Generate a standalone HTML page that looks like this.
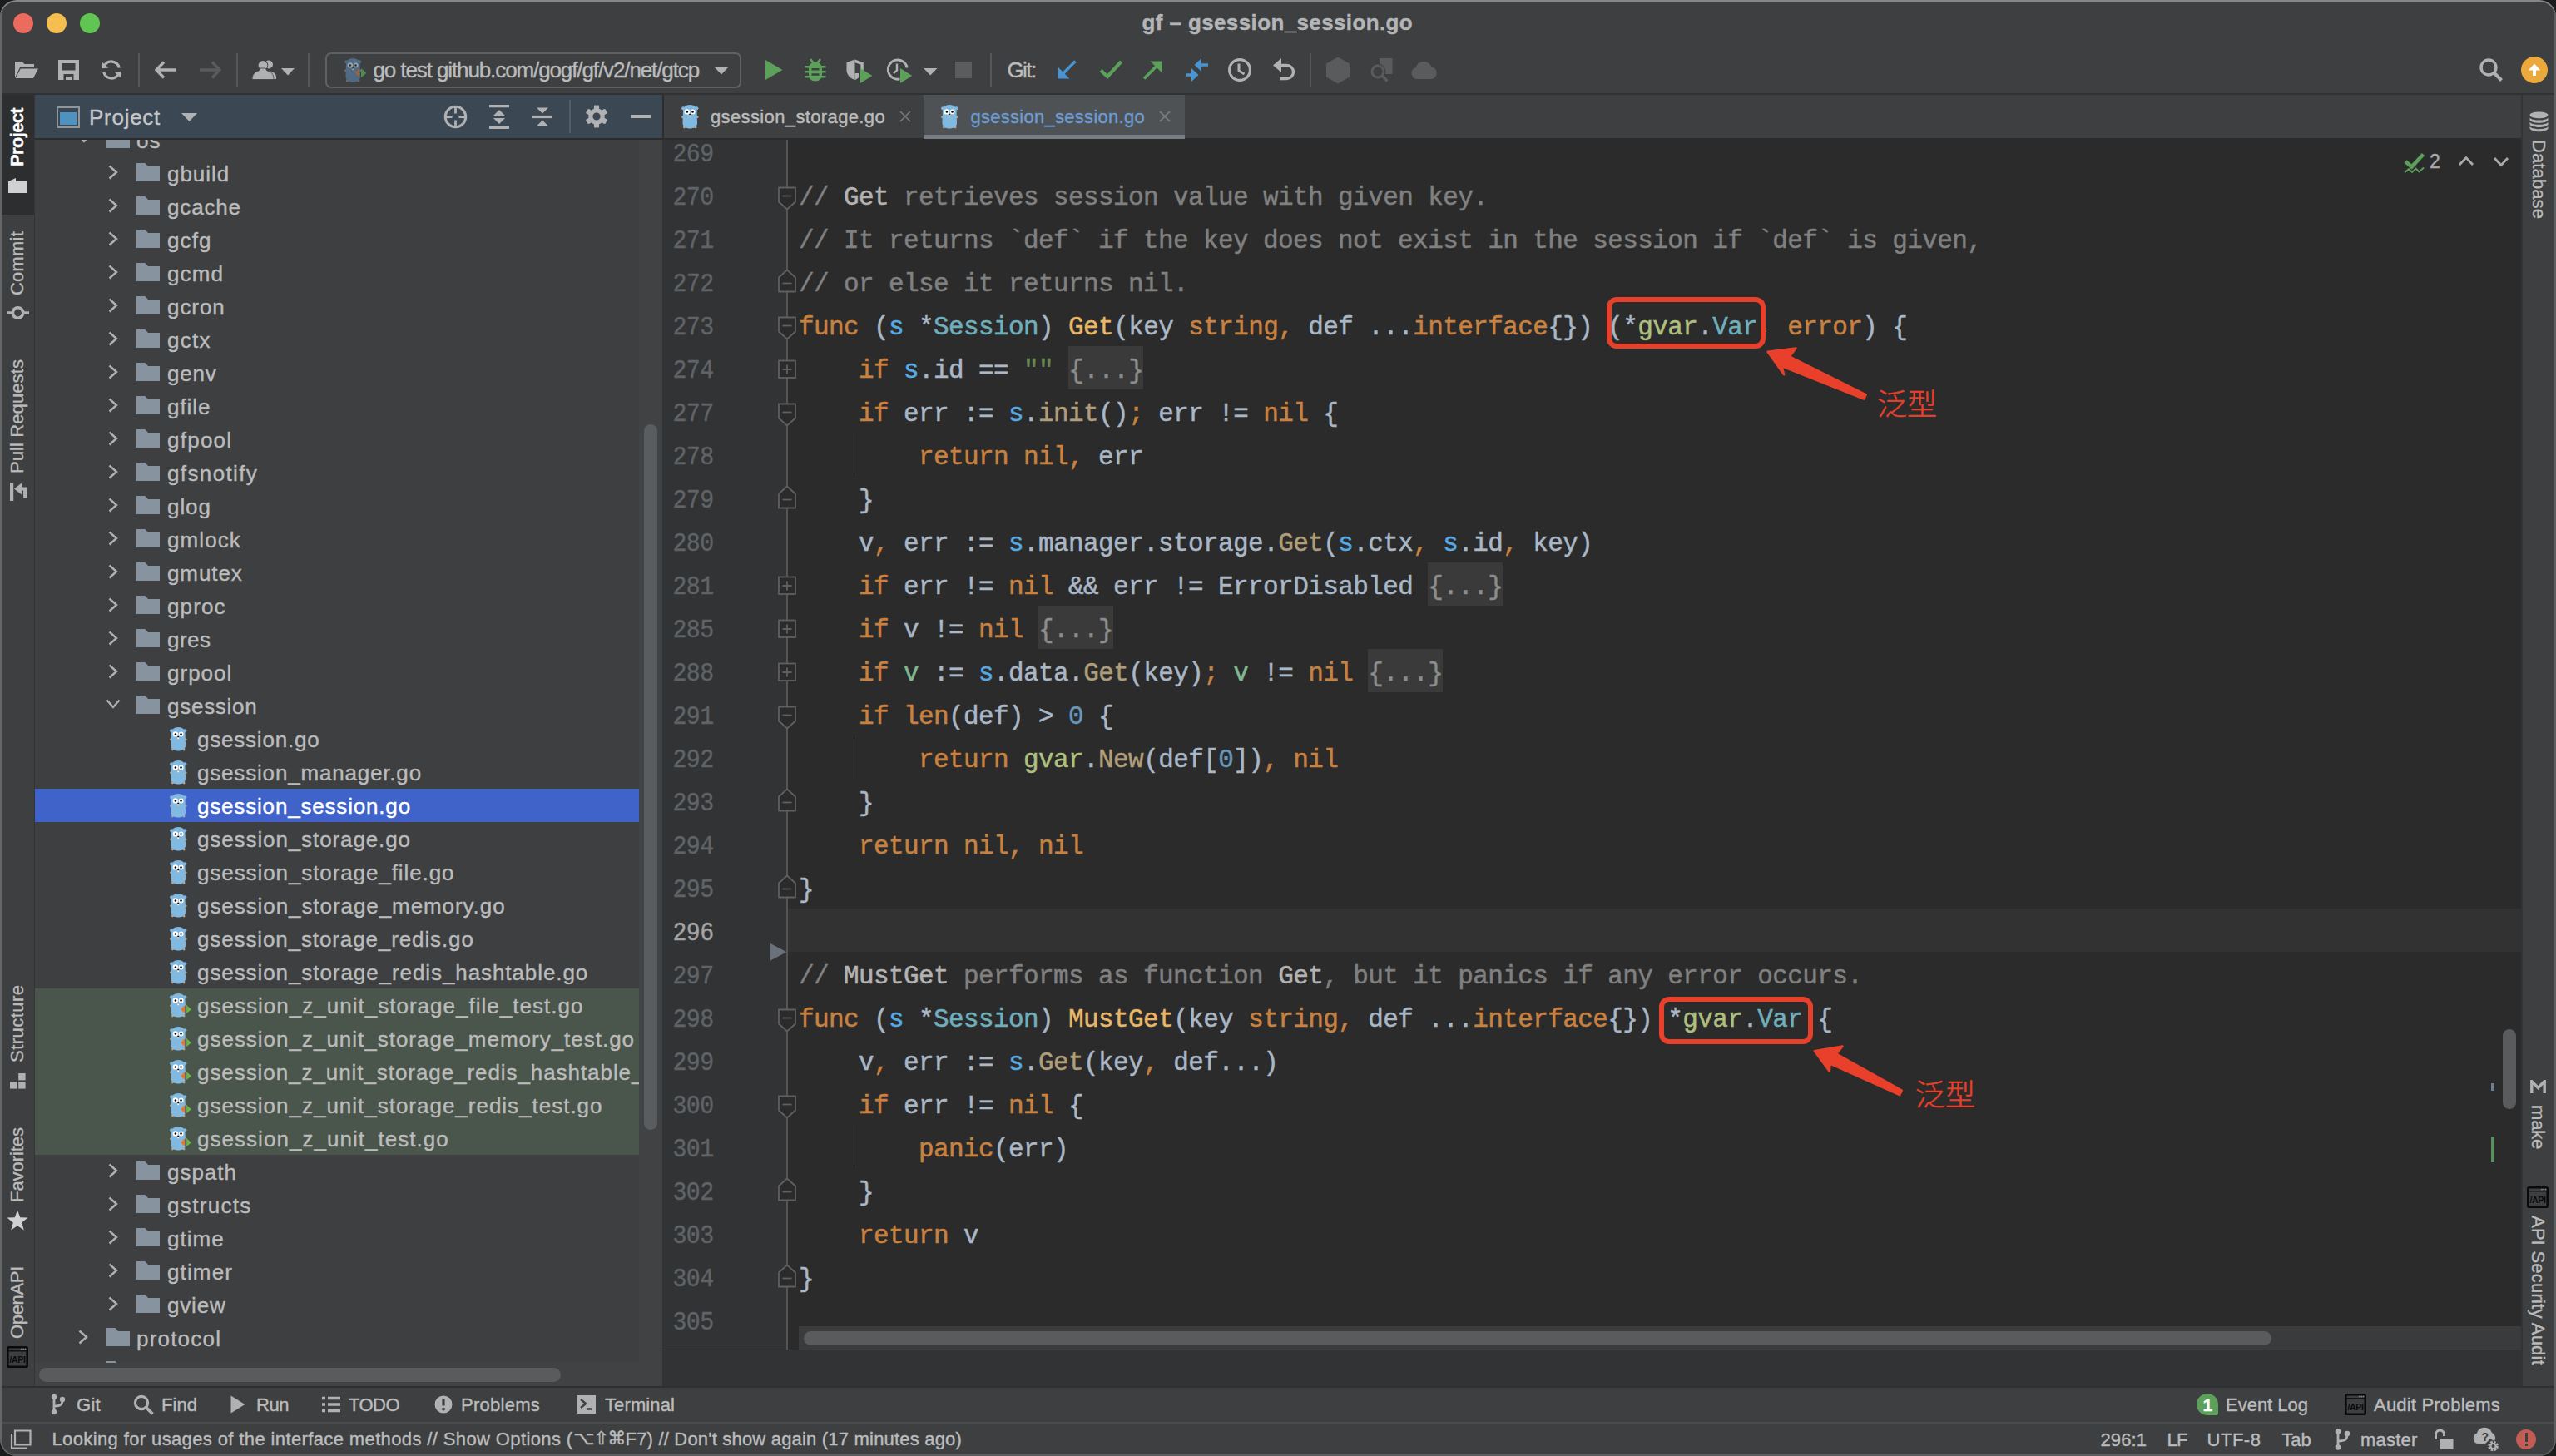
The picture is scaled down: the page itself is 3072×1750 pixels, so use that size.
<!DOCTYPE html>
<html><head><meta charset="utf-8"><title>gf – gsession_session.go</title><style>
html,body{margin:0;padding:0;background:#1b1c1c;}
body{width:3072px;height:1750px;overflow:hidden;position:relative;font-family:"Liberation Sans","Noto Sans CJK SC",sans-serif;}
#win{position:absolute;left:0;top:0;width:3072px;height:1750px;background:#3d3f41;border-radius:20px;overflow:hidden;}
.b{position:absolute;display:block;}
.t{position:absolute;white-space:pre;-webkit-text-stroke:0.4px;}
.code{-webkit-text-stroke:0.5px;position:absolute;white-space:pre;font-family:"Liberation Mono",monospace;font-size:31px;letter-spacing:-0.6px;line-height:52px;color:#a9b7c6;left:960px;}
.ln{-webkit-text-stroke:0.4px;position:absolute;white-space:pre;font-family:"Liberation Mono",monospace;font-size:31px;letter-spacing:-0.6px;line-height:52px;color:#606366;left:806px;transform:scaleX(0.91);transform-origin:27px 0;}
.k{color:#c98140}.c{color:#808080}.cd{color:#b3b3b3}.fd{color:#e8b768}.fc{color:#b09d79}.r{color:#56aae4}.ty{color:#6fafbd}.pk{color:#afbf7e}.s{color:#6a8759}.n{color:#6897bb}.sv{color:#7fb992}
.fold{background:#3a3a3a;color:#8c8c8c;padding:11.5px 0 5.5px;}
.vt{position:absolute;white-space:pre;transform-origin:0 0;}
</style></head><body><div id="win">
<div class="b" style="left:16px;top:16px;width:24px;height:24px;background:#ec6a5e;border-radius:50%;"></div>
<div class="b" style="left:56px;top:16px;width:24px;height:24px;background:#f4bf4f;border-radius:50%;"></div>
<div class="b" style="left:96px;top:16px;width:24px;height:24px;background:#61c554;border-radius:50%;"></div>
<div class="t" style="left:1372.6px;top:7.5px;line-height:39px;font-size:26px;color:#b4b5b6;letter-spacing:0.379px;font-weight:700;">gf – gsession_session.go</div>
<svg class="b" style="left:17px;top:72px;" width="30" height="24" viewBox="0 0 30 24"><path d="M1,2 H9.5 L12.5,5 H24 V9 H7 L1,21.5 Z" fill="#afb1b3"/><path d="M7.8,10.5 H29 L23,22 H1.6 Z" fill="#afb1b3"/></svg>
<svg class="b" style="left:69.5px;top:72px;" width="25" height="24" viewBox="0 0 25 24"><path fill-rule="evenodd" d="M0,0 H25 V24 H0 Z M4.5,4 V12.5 H20.5 V4 Z M6.5,17 V24 H18.5 V17 Z" fill="#afb1b3"/><rect x="9" y="20" width="7" height="4" fill="#afb1b3"/></svg>
<svg class="b" style="left:121px;top:71px;" width="26" height="26" viewBox="0 0 26 26"><path d="M22.3,10.5 A9.6,9.6 0 0 0 4.4,8.2" fill="none" stroke="#afb1b3" stroke-width="3.2"/><path d="M1,3 L1.4,11.2 L9.6,10.6 Z" fill="#afb1b3"/><path d="M3.7,15.5 A9.6,9.6 0 0 0 21.6,17.8" fill="none" stroke="#afb1b3" stroke-width="3.2"/><path d="M25,23 L24.6,14.8 L16.4,15.4 Z" fill="#afb1b3"/></svg>
<div class="b" style="left:166px;top:64px;width:2px;height:40px;background:#555758;"></div>
<svg class="b" style="left:185px;top:72px;" width="28" height="24" viewBox="0 0 28 24"><path d="M27,12 H4 M12,2.5 L3,12 L12,21.5" fill="none" stroke="#afb1b3" stroke-width="3.4"/></svg>
<svg class="b" style="left:239px;top:72px;" width="28" height="24" viewBox="0 0 28 24"><path d="M1,12 H24 M16,2.5 L25,12 L16,21.5" fill="none" stroke="#595b5c" stroke-width="3.4"/></svg>
<div class="b" style="left:284px;top:64px;width:2px;height:40px;background:#555758;"></div>
<svg class="b" style="left:303px;top:71px;" width="30" height="25" viewBox="0 0 30 25"><circle cx="20" cy="6.5" r="5" fill="#afb1b3"/><path d="M13,24 C13,17 16,14.5 20,14.5 C25,14.5 29,17 29,22 V24 Z" fill="#afb1b3"/><circle cx="13" cy="7.5" r="6.3" fill="#3d3f41"/><circle cx="13" cy="7.5" r="5.4" fill="#afb1b3"/><path d="M0,24.5 C0,18 4,15 8,14 L10,11 H16 L18,14 C23,15 26,18 26,24.5 Z" fill="#afb1b3" stroke="#3d3f41" stroke-width="0.8"/></svg>
<svg class="b" style="left:338px;top:82px;" width="16" height="9" viewBox="0 0 16 9"><path d="M0,0 H16 L8,8.5 Z" fill="#afb1b3"/></svg>
<div class="b" style="left:370px;top:64px;width:2px;height:40px;background:#555758;"></div>
<div class="b" style="left:391px;top:63px;width:496px;height:39px;border:2px solid #5f6162;border-radius:7px;"></div>
<svg class="b" style="left:414px;top:70px" width="21.0" height="29.0" viewBox="0 0 21 29"><circle cx="2.2" cy="4.3" r="2.1" fill="#4f6a82"/><circle cx="18.3" cy="4.3" r="2.1" fill="#4f6a82"/><circle cx="1.3" cy="14.8" r="1.3" fill="#7d6f63"/><circle cx="19.3" cy="14.8" r="1.3" fill="#7d6f63"/><circle cx="3.4" cy="27" r="1.4" fill="#7d6f63"/><circle cx="17.1" cy="27" r="1.4" fill="#7d6f63"/><path d="M10.2,0 C5,0 2.2,3 2,7 C1.8,12 1.5,18 1.5,22 C1.5,26.5 5.5,28.5 10.2,28.5 C15,28.5 19,26.5 19,22 C19,18 18.7,12 18.5,7 C18.3,3 15.5,0 10.2,0 Z" fill="#4f6a82"/><circle cx="6.8" cy="8.4" r="3.2" fill="#9aa4ad"/><circle cx="13.7" cy="8.4" r="2.9" fill="#9aa4ad"/><circle cx="6.9" cy="8.4" r="1.25" fill="#2b2d2f"/><circle cx="13.5" cy="8.4" r="1.25" fill="#2b2d2f"/><ellipse cx="10.2" cy="12.3" rx="1.7" ry="1.1" fill="#7d6f63"/><ellipse cx="10.2" cy="11.5" rx="1.0" ry="0.8" fill="#2b2d2f"/><rect x="9.3" y="12.6" width="1.8" height="1.7" rx="0.4" fill="#9aa4ad"/></svg>
<svg class="b" style="left:427px;top:82px;" width="14" height="12" viewBox="0 0 14 12"><path d="M0,5.5 L5,0.5 V10.5 Z" fill="#a0653f"/><path d="M7,0 L13.5,5.8 L7,11.5 Z" fill="#4d8a4b"/></svg>
<div class="t" style="left:448.5px;top:64.5px;line-height:39px;font-size:26px;color:#bbbbbb;letter-spacing:-1.107px;">go test github.com/gogf/gf/v2/net/gtcp</div>
<svg class="b" style="left:858px;top:80px;" width="18" height="10" viewBox="0 0 18 10"><path d="M0,0 H18 L9,9.5 Z" fill="#afb1b3"/></svg>
<svg class="b" style="left:919.5px;top:72px;" width="21" height="24" viewBox="0 0 21 24"><path d="M0,0 L20.5,12 L0,24 Z" fill="#5da05b"/></svg>
<svg class="b" style="left:967px;top:70px;" width="26" height="28" viewBox="0 0 26 28"><path d="M7,1 L11,6 M19,1 L15,6" stroke="#5da05b" stroke-width="2.6" fill="none"/><path fill-rule="evenodd" d="M13,4.5 C18,4.5 21,8 21,13 V19 C21,24 18,27.5 13,27.5 C8,27.5 5,24 5,19 V13 C5,8 8,4.5 13,4.5 Z M8.5,12 V14.6 H17.5 V12 Z M8.5,18.2 V20.8 H17.5 V18.2 Z" fill="#5da05b"/><path d="M0.5,10.3 H6 M20,10.3 H25.5 M0.5,16.3 H6 M20,16.3 H25.5 M0.5,22.3 H6 M20,22.3 H25.5" stroke="#5da05b" stroke-width="2.6"/></svg>
<svg class="b" style="left:1017px;top:71px;" width="32" height="30" viewBox="0 0 32 30"><path d="M10.5,0.5 L0.5,4 V13 C0.5,19 5,23.5 10.5,25 Z" fill="#afb1b3"/><path d="M10.5,0.5 L20.8,4 V14 H17.4 V6.6 L10.5,4.2 Z" fill="#afb1b3"/><path d="M10.5,25 C12.5,24.3 14.2,23.2 15.8,21.5 V17 H10.5 Z" fill="#afb1b3"/><path d="M17,11 L31.5,20 L17,29 Z" fill="#5da05b"/></svg>
<svg class="b" style="left:1064px;top:70px;" width="33" height="31" viewBox="0 0 33 31"><path d="M26.3,11.5 A11.6,11.6 0 1 0 17.5,24.9" fill="none" stroke="#afb1b3" stroke-width="2.8"/><path d="M14,6.5 V14.5 L10,18.2" fill="none" stroke="#afb1b3" stroke-width="2.4"/><path d="M18,12 L32.3,21 L18,30 Z" fill="#5da05b"/></svg>
<svg class="b" style="left:1110px;top:82px;" width="17" height="9" viewBox="0 0 17 9"><path d="M0,0 H16.5 L8.2,8.5 Z" fill="#afb1b3"/></svg>
<div class="b" style="left:1148px;top:74px;width:20px;height:20px;background:#5b5c5d;"></div>
<div class="b" style="left:1190px;top:64px;width:2px;height:40px;background:#555758;"></div>
<div class="t" style="left:1210.5px;top:64.5px;line-height:39px;font-size:26px;color:#bbbbbb;letter-spacing:-1.612px;">Git:</div>
<svg class="b" style="left:1271px;top:72px;" width="24" height="23" viewBox="0 0 24 23"><path d="M21.5,1.5 L5,18" stroke="#4b94cf" stroke-width="3.6" fill="none"/><path d="M0.5,22.5 V8.5 L14.5,22.5 Z" fill="#4b94cf"/></svg>
<svg class="b" style="left:1321px;top:72px;" width="29" height="23" viewBox="0 0 29 23"><path d="M2,12.5 L10,20 L26.5,2" stroke="#5da05b" stroke-width="4.2" fill="none"/></svg>
<svg class="b" style="left:1373px;top:73px;" width="24" height="23" viewBox="0 0 24 23"><path d="M2,21.5 L18.5,5" stroke="#5da05b" stroke-width="3.6" fill="none"/><path d="M23.5,0.5 V14.5 L9.5,0.5 Z" fill="#5da05b"/></svg>
<svg class="b" style="left:1423px;top:69px;" width="30" height="30" viewBox="0 0 30 30"><path d="M29,9 H17 M2,21 H12" stroke="#4b94cf" stroke-width="3.4" fill="none"/><path d="M12.5,9 L21,1 V17 Z" fill="#4b94cf"/><path d="M17.5,21 L9,13 V29 Z" fill="#4b94cf"/></svg>
<svg class="b" style="left:1475px;top:69px;" width="30" height="30" viewBox="0 0 30 30"><circle cx="15" cy="15" r="12.4" fill="none" stroke="#afb1b3" stroke-width="3.2"/><path d="M14,7.5 V16 L20.5,20" fill="none" stroke="#afb1b3" stroke-width="3"/></svg>
<svg class="b" style="left:1529px;top:69px;" width="29" height="28" viewBox="0 0 29 28"><path d="M8,9.5 H17.5 A8,8 0 0 1 17.5,25.5 H9" fill="none" stroke="#afb1b3" stroke-width="3.4"/><path d="M1,9.5 L11,1 V18 Z" fill="#afb1b3"/></svg>
<div class="b" style="left:1574px;top:64px;width:2px;height:40px;background:#555758;"></div>
<svg class="b" style="left:1593px;top:68px;" width="30" height="33" viewBox="0 0 30 33"><path d="M15,0.5 L29,8.5 V24.5 L15,32.5 L1,24.5 V8.5 Z" fill="#595b5c"/></svg>
<svg class="b" style="left:1645px;top:69px;" width="30" height="30" viewBox="0 0 30 30"><rect x="13" y="1" width="15.5" height="19" fill="#595b5c"/><circle cx="11" cy="17" r="9.5" fill="#3d3f41"/><circle cx="11" cy="17" r="7" fill="none" stroke="#595b5c" stroke-width="3"/><path d="M16,22 L22.5,28.5" stroke="#595b5c" stroke-width="3.4"/></svg>
<svg class="b" style="left:1695px;top:72px;" width="34" height="24" viewBox="0 0 34 24"><path d="M8,23 A7,7 0 0 1 6.5,9.3 A10,10 0 0 1 25.5,8.5 A7.4,7.4 0 0 1 26,23 Z" fill="#595b5c"/></svg>
<svg class="b" style="left:2979px;top:69px;" width="30" height="30" viewBox="0 0 30 30"><circle cx="12" cy="12" r="9" fill="none" stroke="#afb1b3" stroke-width="3.4"/><path d="M18.5,18.5 L27.5,27.5" stroke="#afb1b3" stroke-width="4"/></svg>
<div class="b" style="left:3030px;top:68px;width:32px;height:32px;background:#eca93b;border-radius:50%;"></div>
<svg class="b" style="left:3036px;top:74px;" width="20" height="20" viewBox="0 0 20 20"><path d="M10,2.6 L17.2,10.4 H12 V17 H8 V10.4 H2.8 Z" fill="#ffffff"/></svg>
<div class="b" style="left:0px;top:112px;width:3072px;height:2px;background:#2f3132;"></div>
<div class="b" style="left:0px;top:114px;width:42px;height:1552px;background:#3d3f41;"></div>
<div class="b" style="left:0px;top:114px;width:42px;height:144px;background:#2c2e2f;"></div>
<div class="b" style="left:41px;top:114px;width:1px;height:1552px;background:#323435;"></div>
<div class="vt" style="left:6.0px;top:200.0px;transform:rotate(-90deg);font-size:22px;line-height:30px;color:#ffffff;-webkit-text-stroke:0.35px #ffffff;letter-spacing:-0.654px;font-weight:700;">Project</div>
<svg class="b" style="left:10px;top:214px;" width="22" height="18" viewBox="0 0 22 18"><path d="M0,4 L9,0 V4 H22 V18 H0 Z" fill="#d0d1d2"/></svg>
<div class="vt" style="left:6.0px;top:355.0px;transform:rotate(-90deg);font-size:22px;line-height:30px;color:#bbbbbb;-webkit-text-stroke:0.35px #bbbbbb;letter-spacing:0.205px;">Commit</div>
<svg class="b" style="left:7.5px;top:366px;" width="27" height="20" viewBox="0 0 27 20"><circle cx="13.5" cy="10" r="6.2" fill="none" stroke="#afb1b3" stroke-width="3.6"/><path d="M0,10 H7.5 M19.5,10 H27" stroke="#afb1b3" stroke-width="3.6"/></svg>
<div class="vt" style="left:6.0px;top:569.0px;transform:rotate(-90deg);font-size:22px;line-height:30px;color:#bbbbbb;-webkit-text-stroke:0.35px #bbbbbb;letter-spacing:0.097px;">Pull Requests</div>
<svg class="b" style="left:10px;top:580px;" width="23" height="22" viewBox="0 0 23 22"><rect x="2" y="0" width="4.2" height="22" fill="#afb1b3"/><path d="M7,7.5 L16,0.5 V14.5 Z" fill="#afb1b3"/><path d="M15,7.5 H20.2 V19" fill="none" stroke="#afb1b3" stroke-width="4.2"/></svg>
<div class="vt" style="left:6.0px;top:1277.0px;transform:rotate(-90deg);font-size:22px;line-height:30px;color:#bbbbbb;-webkit-text-stroke:0.35px #bbbbbb;letter-spacing:0.472px;">Structure</div>
<svg class="b" style="left:11.8px;top:1289.6px;" width="19" height="19" viewBox="0 0 19 19"><rect x="10.2" y="0" width="8.4" height="8.4" fill="#afb1b3"/><rect x="0" y="10.2" width="8.4" height="8.4" fill="#afb1b3"/><rect x="10.2" y="10.2" width="8.4" height="8.4" fill="#afb1b3"/></svg>
<div class="vt" style="left:6.0px;top:1445.0px;transform:rotate(-90deg);font-size:22px;line-height:30px;color:#bbbbbb;-webkit-text-stroke:0.35px #bbbbbb;letter-spacing:-0.052px;">Favorites</div>
<svg class="b" style="left:8px;top:1454px;" width="26" height="26" viewBox="0 0 26 26"><path d="M13,0.5 L16.2,9.2 L25.5,9.6 L18.2,15.4 L20.8,24.5 L13,19.3 L5.2,24.5 L7.8,15.4 L0.5,9.6 L9.8,9.2 Z" fill="#d0d1d2"/></svg>
<div class="vt" style="left:6.0px;top:1609.0px;transform:rotate(-90deg);font-size:22px;line-height:30px;color:#bbbbbb;-webkit-text-stroke:0.35px #bbbbbb;letter-spacing:-0.325px;">OpenAPI</div>
<svg class="b" style="left:8px;top:1618px" width="26" height="26" viewBox="0 0 26 26"><rect x="1.3" y="1.3" width="23.4" height="23.4" rx="1.5" fill="none" stroke="#0a0a0a" stroke-width="2.6"/><rect x="17" y="2.8" width="1.6" height="1.4" fill="#8a8a8a"/><rect x="19.4" y="2.8" width="1.6" height="1.4" fill="#8a8a8a"/><rect x="21.8" y="2.8" width="1.6" height="1.4" fill="#8a8a8a"/><rect x="1.3" y="5.2" width="23.4" height="1.2" fill="#0a0a0a"/><text x="13" y="19.6" font-family="Liberation Sans, sans-serif" font-size="10.5" font-weight="700" text-anchor="middle" fill="#0a0a0a" letter-spacing="-0.3">/API</text></svg>
<div class="b" style="left:3030px;top:114px;width:42px;height:1552px;background:#3d3f41;"></div>
<div class="b" style="left:3030px;top:114px;width:2px;height:1552px;background:#323435;"></div>
<svg class="b" style="left:3039.5px;top:134px;" width="23" height="25" viewBox="0 0 23 25"><path d="M0.5,4.3 C0.5,-0.9 22.5,-0.9 22.5,4.3 C22.5,9.6 0.5,9.6 0.5,4.3 Z M0.5,7.4 C3,11.6 20,11.6 22.5,7.4 V10.4 C20,14.7 3,14.7 0.5,10.4 Z M0.5,12.7 C3,16.9 20,16.9 22.5,12.7 V15.7 C20,20 3,20 0.5,15.7 Z M0.5,18 C3,22.2 20,22.2 22.5,18 V20.6 C20,25.6 3,25.6 0.5,20.6 Z" fill="#afb1b3"/></svg>
<div class="vt" style="left:3065.5px;top:168.0px;transform:rotate(90deg);font-size:22px;line-height:30px;color:#bbbbbb;-webkit-text-stroke:0.35px #bbbbbb;letter-spacing:0.104px;">Database</div>
<svg class="b" style="left:3041px;top:1298px;" width="19" height="16" viewBox="0 0 19 16"><path d="M1.8,16 V1.5 L9.5,9.5 L17.2,1.5 V16" fill="none" stroke="#afb1b3" stroke-width="3.4"/></svg>
<div class="vt" style="left:3065.0px;top:1328.0px;transform:rotate(90deg);font-size:22px;line-height:30px;color:#bbbbbb;-webkit-text-stroke:0.35px #bbbbbb;letter-spacing:-0.198px;">make</div>
<svg class="b" style="left:3037px;top:1426px" width="26" height="26" viewBox="0 0 26 26"><rect x="1.3" y="1.3" width="23.4" height="23.4" rx="1.5" fill="none" stroke="#0a0a0a" stroke-width="2.6"/><rect x="17" y="2.8" width="1.6" height="1.4" fill="#8a8a8a"/><rect x="19.4" y="2.8" width="1.6" height="1.4" fill="#8a8a8a"/><rect x="21.8" y="2.8" width="1.6" height="1.4" fill="#8a8a8a"/><rect x="1.3" y="5.2" width="23.4" height="1.2" fill="#0a0a0a"/><text x="13" y="19.6" font-family="Liberation Sans, sans-serif" font-size="10.5" font-weight="700" text-anchor="middle" fill="#0a0a0a" letter-spacing="-0.3">/API</text></svg>
<div class="vt" style="left:3065.0px;top:1461.0px;transform:rotate(90deg);font-size:22px;line-height:30px;color:#bbbbbb;-webkit-text-stroke:0.35px #bbbbbb;letter-spacing:0.218px;">API Security Audit</div>
<div class="b" style="left:42px;top:166px;width:754px;height:1500px;background:#3d3f41;"></div>
<div class="b" style="left:42px;top:166px;width:726px;height:1472px;overflow:hidden;">
<svg class="b" style="left:48.8px;top:-8.0px" width="20" height="16" viewBox="0 0 20 16"><path d="M2.5,3.5 L10,12 L17.5,3.5" fill="none" stroke="#afb1b3" stroke-width="2.4"/></svg>
<svg class="b" style="left:86px;top:-10.0px" width="28" height="22" viewBox="0 0 28 22"><path d="M0,0 H10.5 L14,4 H28 V22 H0 Z" fill="#87939e"/></svg>
<div class="t" style="left:122.0px;top:-16.5px;line-height:39px;font-size:26px;color:#bbbbbb;letter-spacing:1.030px;">os</div>
<svg class="b" style="left:85.6px;top:31.0px" width="16" height="20" viewBox="0 0 16 20"><path d="M3.5,2.5 L12,10 L3.5,17.5" fill="none" stroke="#afb1b3" stroke-width="2.4"/></svg>
<svg class="b" style="left:122px;top:30.0px" width="28" height="22" viewBox="0 0 28 22"><path d="M0,0 H10.5 L14,4 H28 V22 H0 Z" fill="#87939e"/></svg>
<div class="t" style="left:159.0px;top:23.5px;line-height:39px;font-size:26px;color:#bbbbbb;letter-spacing:0.969px;">gbuild</div>
<svg class="b" style="left:85.6px;top:71.0px" width="16" height="20" viewBox="0 0 16 20"><path d="M3.5,2.5 L12,10 L3.5,17.5" fill="none" stroke="#afb1b3" stroke-width="2.4"/></svg>
<svg class="b" style="left:122px;top:70.0px" width="28" height="22" viewBox="0 0 28 22"><path d="M0,0 H10.5 L14,4 H28 V22 H0 Z" fill="#87939e"/></svg>
<div class="t" style="left:159.0px;top:63.5px;line-height:39px;font-size:26px;color:#bbbbbb;letter-spacing:0.844px;">gcache</div>
<svg class="b" style="left:85.6px;top:111.0px" width="16" height="20" viewBox="0 0 16 20"><path d="M3.5,2.5 L12,10 L3.5,17.5" fill="none" stroke="#afb1b3" stroke-width="2.4"/></svg>
<svg class="b" style="left:122px;top:110.0px" width="28" height="22" viewBox="0 0 28 22"><path d="M0,0 H10.5 L14,4 H28 V22 H0 Z" fill="#87939e"/></svg>
<div class="t" style="left:159.0px;top:103.5px;line-height:39px;font-size:26px;color:#bbbbbb;letter-spacing:1.090px;">gcfg</div>
<svg class="b" style="left:85.6px;top:151.0px" width="16" height="20" viewBox="0 0 16 20"><path d="M3.5,2.5 L12,10 L3.5,17.5" fill="none" stroke="#afb1b3" stroke-width="2.4"/></svg>
<svg class="b" style="left:122px;top:150.0px" width="28" height="22" viewBox="0 0 28 22"><path d="M0,0 H10.5 L14,4 H28 V22 H0 Z" fill="#87939e"/></svg>
<div class="t" style="left:159.0px;top:143.5px;line-height:39px;font-size:26px;color:#bbbbbb;letter-spacing:1.106px;">gcmd</div>
<svg class="b" style="left:85.6px;top:191.0px" width="16" height="20" viewBox="0 0 16 20"><path d="M3.5,2.5 L12,10 L3.5,17.5" fill="none" stroke="#afb1b3" stroke-width="2.4"/></svg>
<svg class="b" style="left:122px;top:190.0px" width="28" height="22" viewBox="0 0 28 22"><path d="M0,0 H10.5 L14,4 H28 V22 H0 Z" fill="#87939e"/></svg>
<div class="t" style="left:159.0px;top:183.5px;line-height:39px;font-size:26px;color:#bbbbbb;letter-spacing:0.933px;">gcron</div>
<svg class="b" style="left:85.6px;top:231.0px" width="16" height="20" viewBox="0 0 16 20"><path d="M3.5,2.5 L12,10 L3.5,17.5" fill="none" stroke="#afb1b3" stroke-width="2.4"/></svg>
<svg class="b" style="left:122px;top:230.0px" width="28" height="22" viewBox="0 0 28 22"><path d="M0,0 H10.5 L14,4 H28 V22 H0 Z" fill="#87939e"/></svg>
<div class="t" style="left:159.0px;top:223.5px;line-height:39px;font-size:26px;color:#bbbbbb;letter-spacing:1.305px;">gctx</div>
<svg class="b" style="left:85.6px;top:271.0px" width="16" height="20" viewBox="0 0 16 20"><path d="M3.5,2.5 L12,10 L3.5,17.5" fill="none" stroke="#afb1b3" stroke-width="2.4"/></svg>
<svg class="b" style="left:122px;top:270.0px" width="28" height="22" viewBox="0 0 28 22"><path d="M0,0 H10.5 L14,4 H28 V22 H0 Z" fill="#87939e"/></svg>
<div class="t" style="left:159.0px;top:263.5px;line-height:39px;font-size:26px;color:#bbbbbb;letter-spacing:0.781px;">genv</div>
<svg class="b" style="left:85.6px;top:311.0px" width="16" height="20" viewBox="0 0 16 20"><path d="M3.5,2.5 L12,10 L3.5,17.5" fill="none" stroke="#afb1b3" stroke-width="2.4"/></svg>
<svg class="b" style="left:122px;top:310.0px" width="28" height="22" viewBox="0 0 28 22"><path d="M0,0 H10.5 L14,4 H28 V22 H0 Z" fill="#87939e"/></svg>
<div class="t" style="left:159.0px;top:303.5px;line-height:39px;font-size:26px;color:#bbbbbb;letter-spacing:0.961px;">gfile</div>
<svg class="b" style="left:85.6px;top:351.0px" width="16" height="20" viewBox="0 0 16 20"><path d="M3.5,2.5 L12,10 L3.5,17.5" fill="none" stroke="#afb1b3" stroke-width="2.4"/></svg>
<svg class="b" style="left:122px;top:350.0px" width="28" height="22" viewBox="0 0 28 22"><path d="M0,0 H10.5 L14,4 H28 V22 H0 Z" fill="#87939e"/></svg>
<div class="t" style="left:159.0px;top:343.5px;line-height:39px;font-size:26px;color:#bbbbbb;letter-spacing:1.244px;">gfpool</div>
<svg class="b" style="left:85.6px;top:391.0px" width="16" height="20" viewBox="0 0 16 20"><path d="M3.5,2.5 L12,10 L3.5,17.5" fill="none" stroke="#afb1b3" stroke-width="2.4"/></svg>
<svg class="b" style="left:122px;top:390.0px" width="28" height="22" viewBox="0 0 28 22"><path d="M0,0 H10.5 L14,4 H28 V22 H0 Z" fill="#87939e"/></svg>
<div class="t" style="left:159.0px;top:383.5px;line-height:39px;font-size:26px;color:#bbbbbb;letter-spacing:1.375px;">gfsnotify</div>
<svg class="b" style="left:85.6px;top:431.0px" width="16" height="20" viewBox="0 0 16 20"><path d="M3.5,2.5 L12,10 L3.5,17.5" fill="none" stroke="#afb1b3" stroke-width="2.4"/></svg>
<svg class="b" style="left:122px;top:430.0px" width="28" height="22" viewBox="0 0 28 22"><path d="M0,0 H10.5 L14,4 H28 V22 H0 Z" fill="#87939e"/></svg>
<div class="t" style="left:159.0px;top:423.5px;line-height:39px;font-size:26px;color:#bbbbbb;letter-spacing:0.937px;">glog</div>
<svg class="b" style="left:85.6px;top:471.0px" width="16" height="20" viewBox="0 0 16 20"><path d="M3.5,2.5 L12,10 L3.5,17.5" fill="none" stroke="#afb1b3" stroke-width="2.4"/></svg>
<svg class="b" style="left:122px;top:470.0px" width="28" height="22" viewBox="0 0 28 22"><path d="M0,0 H10.5 L14,4 H28 V22 H0 Z" fill="#87939e"/></svg>
<div class="t" style="left:159.0px;top:463.5px;line-height:39px;font-size:26px;color:#bbbbbb;letter-spacing:1.092px;">gmlock</div>
<svg class="b" style="left:85.6px;top:511.0px" width="16" height="20" viewBox="0 0 16 20"><path d="M3.5,2.5 L12,10 L3.5,17.5" fill="none" stroke="#afb1b3" stroke-width="2.4"/></svg>
<svg class="b" style="left:122px;top:510.0px" width="28" height="22" viewBox="0 0 28 22"><path d="M0,0 H10.5 L14,4 H28 V22 H0 Z" fill="#87939e"/></svg>
<div class="t" style="left:159.0px;top:503.5px;line-height:39px;font-size:26px;color:#bbbbbb;letter-spacing:0.907px;">gmutex</div>
<svg class="b" style="left:85.6px;top:551.0px" width="16" height="20" viewBox="0 0 16 20"><path d="M3.5,2.5 L12,10 L3.5,17.5" fill="none" stroke="#afb1b3" stroke-width="2.4"/></svg>
<svg class="b" style="left:122px;top:550.0px" width="28" height="22" viewBox="0 0 28 22"><path d="M0,0 H10.5 L14,4 H28 V22 H0 Z" fill="#87939e"/></svg>
<div class="t" style="left:159.0px;top:543.5px;line-height:39px;font-size:26px;color:#bbbbbb;letter-spacing:1.133px;">gproc</div>
<svg class="b" style="left:85.6px;top:591.0px" width="16" height="20" viewBox="0 0 16 20"><path d="M3.5,2.5 L12,10 L3.5,17.5" fill="none" stroke="#afb1b3" stroke-width="2.4"/></svg>
<svg class="b" style="left:122px;top:590.0px" width="28" height="22" viewBox="0 0 28 22"><path d="M0,0 H10.5 L14,4 H28 V22 H0 Z" fill="#87939e"/></svg>
<div class="t" style="left:159.0px;top:583.5px;line-height:39px;font-size:26px;color:#bbbbbb;letter-spacing:0.481px;">gres</div>
<svg class="b" style="left:85.6px;top:631.0px" width="16" height="20" viewBox="0 0 16 20"><path d="M3.5,2.5 L12,10 L3.5,17.5" fill="none" stroke="#afb1b3" stroke-width="2.4"/></svg>
<svg class="b" style="left:122px;top:630.0px" width="28" height="22" viewBox="0 0 28 22"><path d="M0,0 H10.5 L14,4 H28 V22 H0 Z" fill="#87939e"/></svg>
<div class="t" style="left:159.0px;top:623.5px;line-height:39px;font-size:26px;color:#bbbbbb;letter-spacing:1.005px;">grpool</div>
<svg class="b" style="left:84.1px;top:672.0px" width="20" height="16" viewBox="0 0 20 16"><path d="M2.5,3.5 L10,12 L17.5,3.5" fill="none" stroke="#afb1b3" stroke-width="2.4"/></svg>
<svg class="b" style="left:122px;top:670.0px" width="28" height="22" viewBox="0 0 28 22"><path d="M0,0 H10.5 L14,4 H28 V22 H0 Z" fill="#87939e"/></svg>
<div class="t" style="left:159.0px;top:663.5px;line-height:39px;font-size:26px;color:#bbbbbb;letter-spacing:0.736px;">gsession</div>
<svg class="b" style="left:162px;top:707.5px" width="21.0" height="29.0" viewBox="0 0 21 29"><circle cx="2.2" cy="4.3" r="2.1" fill="#82b9e1"/><circle cx="18.3" cy="4.3" r="2.1" fill="#82b9e1"/><circle cx="1.3" cy="14.8" r="1.3" fill="#c8a27c"/><circle cx="19.3" cy="14.8" r="1.3" fill="#c8a27c"/><circle cx="3.4" cy="27" r="1.4" fill="#c8a27c"/><circle cx="17.1" cy="27" r="1.4" fill="#c8a27c"/><path d="M10.2,0 C5,0 2.2,3 2,7 C1.8,12 1.5,18 1.5,22 C1.5,26.5 5.5,28.5 10.2,28.5 C15,28.5 19,26.5 19,22 C19,18 18.7,12 18.5,7 C18.3,3 15.5,0 10.2,0 Z" fill="#82b9e1"/><circle cx="6.8" cy="8.4" r="3.2" fill="#ffffff"/><circle cx="13.7" cy="8.4" r="2.9" fill="#ffffff"/><circle cx="6.9" cy="8.4" r="1.25" fill="#000000"/><circle cx="13.5" cy="8.4" r="1.25" fill="#000000"/><ellipse cx="10.2" cy="12.3" rx="1.7" ry="1.1" fill="#c8a27c"/><ellipse cx="10.2" cy="11.5" rx="1.0" ry="0.8" fill="#000000"/><rect x="9.3" y="12.6" width="1.8" height="1.7" rx="0.4" fill="#ffffff"/></svg>
<div class="t" style="left:195.0px;top:703.5px;line-height:39px;font-size:26px;color:#bbbbbb;letter-spacing:0.786px;">gsession.go</div>
<svg class="b" style="left:162px;top:747.5px" width="21.0" height="29.0" viewBox="0 0 21 29"><circle cx="2.2" cy="4.3" r="2.1" fill="#82b9e1"/><circle cx="18.3" cy="4.3" r="2.1" fill="#82b9e1"/><circle cx="1.3" cy="14.8" r="1.3" fill="#c8a27c"/><circle cx="19.3" cy="14.8" r="1.3" fill="#c8a27c"/><circle cx="3.4" cy="27" r="1.4" fill="#c8a27c"/><circle cx="17.1" cy="27" r="1.4" fill="#c8a27c"/><path d="M10.2,0 C5,0 2.2,3 2,7 C1.8,12 1.5,18 1.5,22 C1.5,26.5 5.5,28.5 10.2,28.5 C15,28.5 19,26.5 19,22 C19,18 18.7,12 18.5,7 C18.3,3 15.5,0 10.2,0 Z" fill="#82b9e1"/><circle cx="6.8" cy="8.4" r="3.2" fill="#ffffff"/><circle cx="13.7" cy="8.4" r="2.9" fill="#ffffff"/><circle cx="6.9" cy="8.4" r="1.25" fill="#000000"/><circle cx="13.5" cy="8.4" r="1.25" fill="#000000"/><ellipse cx="10.2" cy="12.3" rx="1.7" ry="1.1" fill="#c8a27c"/><ellipse cx="10.2" cy="11.5" rx="1.0" ry="0.8" fill="#000000"/><rect x="9.3" y="12.6" width="1.8" height="1.7" rx="0.4" fill="#ffffff"/></svg>
<div class="t" style="left:195.0px;top:743.5px;line-height:39px;font-size:26px;color:#bbbbbb;letter-spacing:0.817px;">gsession_manager.go</div>
<div class="b" style="left:0px;top:782px;width:726px;height:40px;background:#4063c9;"></div>
<svg class="b" style="left:162px;top:787.5px" width="21.0" height="29.0" viewBox="0 0 21 29"><circle cx="2.2" cy="4.3" r="2.1" fill="#82b9e1"/><circle cx="18.3" cy="4.3" r="2.1" fill="#82b9e1"/><circle cx="1.3" cy="14.8" r="1.3" fill="#c8a27c"/><circle cx="19.3" cy="14.8" r="1.3" fill="#c8a27c"/><circle cx="3.4" cy="27" r="1.4" fill="#c8a27c"/><circle cx="17.1" cy="27" r="1.4" fill="#c8a27c"/><path d="M10.2,0 C5,0 2.2,3 2,7 C1.8,12 1.5,18 1.5,22 C1.5,26.5 5.5,28.5 10.2,28.5 C15,28.5 19,26.5 19,22 C19,18 18.7,12 18.5,7 C18.3,3 15.5,0 10.2,0 Z" fill="#82b9e1"/><circle cx="6.8" cy="8.4" r="3.2" fill="#ffffff"/><circle cx="13.7" cy="8.4" r="2.9" fill="#ffffff"/><circle cx="6.9" cy="8.4" r="1.25" fill="#000000"/><circle cx="13.5" cy="8.4" r="1.25" fill="#000000"/><ellipse cx="10.2" cy="12.3" rx="1.7" ry="1.1" fill="#c8a27c"/><ellipse cx="10.2" cy="11.5" rx="1.0" ry="0.8" fill="#000000"/><rect x="9.3" y="12.6" width="1.8" height="1.7" rx="0.4" fill="#ffffff"/></svg>
<div class="t" style="left:195.0px;top:783.5px;line-height:39px;font-size:26px;color:#ffffff;letter-spacing:0.818px;">gsession_session.go</div>
<svg class="b" style="left:162px;top:827.5px" width="21.0" height="29.0" viewBox="0 0 21 29"><circle cx="2.2" cy="4.3" r="2.1" fill="#82b9e1"/><circle cx="18.3" cy="4.3" r="2.1" fill="#82b9e1"/><circle cx="1.3" cy="14.8" r="1.3" fill="#c8a27c"/><circle cx="19.3" cy="14.8" r="1.3" fill="#c8a27c"/><circle cx="3.4" cy="27" r="1.4" fill="#c8a27c"/><circle cx="17.1" cy="27" r="1.4" fill="#c8a27c"/><path d="M10.2,0 C5,0 2.2,3 2,7 C1.8,12 1.5,18 1.5,22 C1.5,26.5 5.5,28.5 10.2,28.5 C15,28.5 19,26.5 19,22 C19,18 18.7,12 18.5,7 C18.3,3 15.5,0 10.2,0 Z" fill="#82b9e1"/><circle cx="6.8" cy="8.4" r="3.2" fill="#ffffff"/><circle cx="13.7" cy="8.4" r="2.9" fill="#ffffff"/><circle cx="6.9" cy="8.4" r="1.25" fill="#000000"/><circle cx="13.5" cy="8.4" r="1.25" fill="#000000"/><ellipse cx="10.2" cy="12.3" rx="1.7" ry="1.1" fill="#c8a27c"/><ellipse cx="10.2" cy="11.5" rx="1.0" ry="0.8" fill="#000000"/><rect x="9.3" y="12.6" width="1.8" height="1.7" rx="0.4" fill="#ffffff"/></svg>
<div class="t" style="left:195.0px;top:823.5px;line-height:39px;font-size:26px;color:#bbbbbb;letter-spacing:0.894px;">gsession_storage.go</div>
<svg class="b" style="left:162px;top:867.5px" width="21.0" height="29.0" viewBox="0 0 21 29"><circle cx="2.2" cy="4.3" r="2.1" fill="#82b9e1"/><circle cx="18.3" cy="4.3" r="2.1" fill="#82b9e1"/><circle cx="1.3" cy="14.8" r="1.3" fill="#c8a27c"/><circle cx="19.3" cy="14.8" r="1.3" fill="#c8a27c"/><circle cx="3.4" cy="27" r="1.4" fill="#c8a27c"/><circle cx="17.1" cy="27" r="1.4" fill="#c8a27c"/><path d="M10.2,0 C5,0 2.2,3 2,7 C1.8,12 1.5,18 1.5,22 C1.5,26.5 5.5,28.5 10.2,28.5 C15,28.5 19,26.5 19,22 C19,18 18.7,12 18.5,7 C18.3,3 15.5,0 10.2,0 Z" fill="#82b9e1"/><circle cx="6.8" cy="8.4" r="3.2" fill="#ffffff"/><circle cx="13.7" cy="8.4" r="2.9" fill="#ffffff"/><circle cx="6.9" cy="8.4" r="1.25" fill="#000000"/><circle cx="13.5" cy="8.4" r="1.25" fill="#000000"/><ellipse cx="10.2" cy="12.3" rx="1.7" ry="1.1" fill="#c8a27c"/><ellipse cx="10.2" cy="11.5" rx="1.0" ry="0.8" fill="#000000"/><rect x="9.3" y="12.6" width="1.8" height="1.7" rx="0.4" fill="#ffffff"/></svg>
<div class="t" style="left:195.0px;top:863.5px;line-height:39px;font-size:26px;color:#bbbbbb;letter-spacing:0.908px;">gsession_storage_file.go</div>
<svg class="b" style="left:162px;top:907.5px" width="21.0" height="29.0" viewBox="0 0 21 29"><circle cx="2.2" cy="4.3" r="2.1" fill="#82b9e1"/><circle cx="18.3" cy="4.3" r="2.1" fill="#82b9e1"/><circle cx="1.3" cy="14.8" r="1.3" fill="#c8a27c"/><circle cx="19.3" cy="14.8" r="1.3" fill="#c8a27c"/><circle cx="3.4" cy="27" r="1.4" fill="#c8a27c"/><circle cx="17.1" cy="27" r="1.4" fill="#c8a27c"/><path d="M10.2,0 C5,0 2.2,3 2,7 C1.8,12 1.5,18 1.5,22 C1.5,26.5 5.5,28.5 10.2,28.5 C15,28.5 19,26.5 19,22 C19,18 18.7,12 18.5,7 C18.3,3 15.5,0 10.2,0 Z" fill="#82b9e1"/><circle cx="6.8" cy="8.4" r="3.2" fill="#ffffff"/><circle cx="13.7" cy="8.4" r="2.9" fill="#ffffff"/><circle cx="6.9" cy="8.4" r="1.25" fill="#000000"/><circle cx="13.5" cy="8.4" r="1.25" fill="#000000"/><ellipse cx="10.2" cy="12.3" rx="1.7" ry="1.1" fill="#c8a27c"/><ellipse cx="10.2" cy="11.5" rx="1.0" ry="0.8" fill="#000000"/><rect x="9.3" y="12.6" width="1.8" height="1.7" rx="0.4" fill="#ffffff"/></svg>
<div class="t" style="left:195.0px;top:903.5px;line-height:39px;font-size:26px;color:#bbbbbb;letter-spacing:0.929px;">gsession_storage_memory.go</div>
<svg class="b" style="left:162px;top:947.5px" width="21.0" height="29.0" viewBox="0 0 21 29"><circle cx="2.2" cy="4.3" r="2.1" fill="#82b9e1"/><circle cx="18.3" cy="4.3" r="2.1" fill="#82b9e1"/><circle cx="1.3" cy="14.8" r="1.3" fill="#c8a27c"/><circle cx="19.3" cy="14.8" r="1.3" fill="#c8a27c"/><circle cx="3.4" cy="27" r="1.4" fill="#c8a27c"/><circle cx="17.1" cy="27" r="1.4" fill="#c8a27c"/><path d="M10.2,0 C5,0 2.2,3 2,7 C1.8,12 1.5,18 1.5,22 C1.5,26.5 5.5,28.5 10.2,28.5 C15,28.5 19,26.5 19,22 C19,18 18.7,12 18.5,7 C18.3,3 15.5,0 10.2,0 Z" fill="#82b9e1"/><circle cx="6.8" cy="8.4" r="3.2" fill="#ffffff"/><circle cx="13.7" cy="8.4" r="2.9" fill="#ffffff"/><circle cx="6.9" cy="8.4" r="1.25" fill="#000000"/><circle cx="13.5" cy="8.4" r="1.25" fill="#000000"/><ellipse cx="10.2" cy="12.3" rx="1.7" ry="1.1" fill="#c8a27c"/><ellipse cx="10.2" cy="11.5" rx="1.0" ry="0.8" fill="#000000"/><rect x="9.3" y="12.6" width="1.8" height="1.7" rx="0.4" fill="#ffffff"/></svg>
<div class="t" style="left:195.0px;top:943.5px;line-height:39px;font-size:26px;color:#bbbbbb;letter-spacing:0.879px;">gsession_storage_redis.go</div>
<svg class="b" style="left:162px;top:987.5px" width="21.0" height="29.0" viewBox="0 0 21 29"><circle cx="2.2" cy="4.3" r="2.1" fill="#82b9e1"/><circle cx="18.3" cy="4.3" r="2.1" fill="#82b9e1"/><circle cx="1.3" cy="14.8" r="1.3" fill="#c8a27c"/><circle cx="19.3" cy="14.8" r="1.3" fill="#c8a27c"/><circle cx="3.4" cy="27" r="1.4" fill="#c8a27c"/><circle cx="17.1" cy="27" r="1.4" fill="#c8a27c"/><path d="M10.2,0 C5,0 2.2,3 2,7 C1.8,12 1.5,18 1.5,22 C1.5,26.5 5.5,28.5 10.2,28.5 C15,28.5 19,26.5 19,22 C19,18 18.7,12 18.5,7 C18.3,3 15.5,0 10.2,0 Z" fill="#82b9e1"/><circle cx="6.8" cy="8.4" r="3.2" fill="#ffffff"/><circle cx="13.7" cy="8.4" r="2.9" fill="#ffffff"/><circle cx="6.9" cy="8.4" r="1.25" fill="#000000"/><circle cx="13.5" cy="8.4" r="1.25" fill="#000000"/><ellipse cx="10.2" cy="12.3" rx="1.7" ry="1.1" fill="#c8a27c"/><ellipse cx="10.2" cy="11.5" rx="1.0" ry="0.8" fill="#000000"/><rect x="9.3" y="12.6" width="1.8" height="1.7" rx="0.4" fill="#ffffff"/></svg>
<div class="t" style="left:195.0px;top:983.5px;line-height:39px;font-size:26px;color:#bbbbbb;letter-spacing:0.922px;">gsession_storage_redis_hashtable.go</div>
<div class="b" style="left:0px;top:1022px;width:726px;height:40px;background:#4a554b;"></div>
<svg class="b" style="left:162px;top:1027.5px" width="27.0" height="29.0" viewBox="0 0 27 29"><circle cx="2.2" cy="4.3" r="2.1" fill="#82b9e1"/><circle cx="18.3" cy="4.3" r="2.1" fill="#82b9e1"/><circle cx="1.3" cy="14.8" r="1.3" fill="#c8a27c"/><circle cx="19.3" cy="14.8" r="1.3" fill="#c8a27c"/><circle cx="3.4" cy="27" r="1.4" fill="#c8a27c"/><circle cx="17.1" cy="27" r="1.4" fill="#c8a27c"/><path d="M10.2,0 C5,0 2.2,3 2,7 C1.8,12 1.5,18 1.5,22 C1.5,26.5 5.5,28.5 10.2,28.5 C15,28.5 19,26.5 19,22 C19,18 18.7,12 18.5,7 C18.3,3 15.5,0 10.2,0 Z" fill="#82b9e1"/><circle cx="6.8" cy="8.4" r="3.2" fill="#ffffff"/><circle cx="13.7" cy="8.4" r="2.9" fill="#ffffff"/><circle cx="6.9" cy="8.4" r="1.25" fill="#000000"/><circle cx="13.5" cy="8.4" r="1.25" fill="#000000"/><ellipse cx="10.2" cy="12.3" rx="1.7" ry="1.1" fill="#c8a27c"/><ellipse cx="10.2" cy="11.5" rx="1.0" ry="0.8" fill="#000000"/><rect x="9.3" y="12.6" width="1.8" height="1.7" rx="0.4" fill="#ffffff"/><path d="M12.9,19.2 L18.4,14.2 L18.4,24.1 Z" fill="#e8772e"/><rect x="18.4" y="14.4" width="1.5" height="9.6" fill="#3b4a52"/><path d="M20.2,14.2 L26,19.2 L20.2,24.1 Z" fill="#6cb645"/></svg>
<div class="t" style="left:195.0px;top:1023.5px;line-height:39px;font-size:26px;color:#bbbbbb;letter-spacing:1.016px;">gsession_z_unit_storage_file_test.go</div>
<div class="b" style="left:0px;top:1062px;width:726px;height:40px;background:#4a554b;"></div>
<svg class="b" style="left:162px;top:1067.5px" width="27.0" height="29.0" viewBox="0 0 27 29"><circle cx="2.2" cy="4.3" r="2.1" fill="#82b9e1"/><circle cx="18.3" cy="4.3" r="2.1" fill="#82b9e1"/><circle cx="1.3" cy="14.8" r="1.3" fill="#c8a27c"/><circle cx="19.3" cy="14.8" r="1.3" fill="#c8a27c"/><circle cx="3.4" cy="27" r="1.4" fill="#c8a27c"/><circle cx="17.1" cy="27" r="1.4" fill="#c8a27c"/><path d="M10.2,0 C5,0 2.2,3 2,7 C1.8,12 1.5,18 1.5,22 C1.5,26.5 5.5,28.5 10.2,28.5 C15,28.5 19,26.5 19,22 C19,18 18.7,12 18.5,7 C18.3,3 15.5,0 10.2,0 Z" fill="#82b9e1"/><circle cx="6.8" cy="8.4" r="3.2" fill="#ffffff"/><circle cx="13.7" cy="8.4" r="2.9" fill="#ffffff"/><circle cx="6.9" cy="8.4" r="1.25" fill="#000000"/><circle cx="13.5" cy="8.4" r="1.25" fill="#000000"/><ellipse cx="10.2" cy="12.3" rx="1.7" ry="1.1" fill="#c8a27c"/><ellipse cx="10.2" cy="11.5" rx="1.0" ry="0.8" fill="#000000"/><rect x="9.3" y="12.6" width="1.8" height="1.7" rx="0.4" fill="#ffffff"/><path d="M12.9,19.2 L18.4,14.2 L18.4,24.1 Z" fill="#e8772e"/><rect x="18.4" y="14.4" width="1.5" height="9.6" fill="#3b4a52"/><path d="M20.2,14.2 L26,19.2 L20.2,24.1 Z" fill="#6cb645"/></svg>
<div class="t" style="left:195.0px;top:1063.5px;line-height:39px;font-size:26px;color:#bbbbbb;letter-spacing:0.988px;">gsession_z_unit_storage_memory_test.go</div>
<div class="b" style="left:0px;top:1102px;width:726px;height:40px;background:#4a554b;"></div>
<svg class="b" style="left:162px;top:1107.5px" width="27.0" height="29.0" viewBox="0 0 27 29"><circle cx="2.2" cy="4.3" r="2.1" fill="#82b9e1"/><circle cx="18.3" cy="4.3" r="2.1" fill="#82b9e1"/><circle cx="1.3" cy="14.8" r="1.3" fill="#c8a27c"/><circle cx="19.3" cy="14.8" r="1.3" fill="#c8a27c"/><circle cx="3.4" cy="27" r="1.4" fill="#c8a27c"/><circle cx="17.1" cy="27" r="1.4" fill="#c8a27c"/><path d="M10.2,0 C5,0 2.2,3 2,7 C1.8,12 1.5,18 1.5,22 C1.5,26.5 5.5,28.5 10.2,28.5 C15,28.5 19,26.5 19,22 C19,18 18.7,12 18.5,7 C18.3,3 15.5,0 10.2,0 Z" fill="#82b9e1"/><circle cx="6.8" cy="8.4" r="3.2" fill="#ffffff"/><circle cx="13.7" cy="8.4" r="2.9" fill="#ffffff"/><circle cx="6.9" cy="8.4" r="1.25" fill="#000000"/><circle cx="13.5" cy="8.4" r="1.25" fill="#000000"/><ellipse cx="10.2" cy="12.3" rx="1.7" ry="1.1" fill="#c8a27c"/><ellipse cx="10.2" cy="11.5" rx="1.0" ry="0.8" fill="#000000"/><rect x="9.3" y="12.6" width="1.8" height="1.7" rx="0.4" fill="#ffffff"/><path d="M12.9,19.2 L18.4,14.2 L18.4,24.1 Z" fill="#e8772e"/><rect x="18.4" y="14.4" width="1.5" height="9.6" fill="#3b4a52"/><path d="M20.2,14.2 L26,19.2 L20.2,24.1 Z" fill="#6cb645"/></svg>
<div class="t" style="left:195.0px;top:1103.5px;line-height:39px;font-size:26px;color:#bbbbbb;letter-spacing:0.931px;">gsession_z_unit_storage_redis_hashtable_test.go</div>
<div class="b" style="left:0px;top:1142px;width:726px;height:40px;background:#4a554b;"></div>
<svg class="b" style="left:162px;top:1147.5px" width="27.0" height="29.0" viewBox="0 0 27 29"><circle cx="2.2" cy="4.3" r="2.1" fill="#82b9e1"/><circle cx="18.3" cy="4.3" r="2.1" fill="#82b9e1"/><circle cx="1.3" cy="14.8" r="1.3" fill="#c8a27c"/><circle cx="19.3" cy="14.8" r="1.3" fill="#c8a27c"/><circle cx="3.4" cy="27" r="1.4" fill="#c8a27c"/><circle cx="17.1" cy="27" r="1.4" fill="#c8a27c"/><path d="M10.2,0 C5,0 2.2,3 2,7 C1.8,12 1.5,18 1.5,22 C1.5,26.5 5.5,28.5 10.2,28.5 C15,28.5 19,26.5 19,22 C19,18 18.7,12 18.5,7 C18.3,3 15.5,0 10.2,0 Z" fill="#82b9e1"/><circle cx="6.8" cy="8.4" r="3.2" fill="#ffffff"/><circle cx="13.7" cy="8.4" r="2.9" fill="#ffffff"/><circle cx="6.9" cy="8.4" r="1.25" fill="#000000"/><circle cx="13.5" cy="8.4" r="1.25" fill="#000000"/><ellipse cx="10.2" cy="12.3" rx="1.7" ry="1.1" fill="#c8a27c"/><ellipse cx="10.2" cy="11.5" rx="1.0" ry="0.8" fill="#000000"/><rect x="9.3" y="12.6" width="1.8" height="1.7" rx="0.4" fill="#ffffff"/><path d="M12.9,19.2 L18.4,14.2 L18.4,24.1 Z" fill="#e8772e"/><rect x="18.4" y="14.4" width="1.5" height="9.6" fill="#3b4a52"/><path d="M20.2,14.2 L26,19.2 L20.2,24.1 Z" fill="#6cb645"/></svg>
<div class="t" style="left:195.0px;top:1143.5px;line-height:39px;font-size:26px;color:#bbbbbb;letter-spacing:0.988px;">gsession_z_unit_storage_redis_test.go</div>
<div class="b" style="left:0px;top:1182px;width:726px;height:40px;background:#4a554b;"></div>
<svg class="b" style="left:162px;top:1187.5px" width="27.0" height="29.0" viewBox="0 0 27 29"><circle cx="2.2" cy="4.3" r="2.1" fill="#82b9e1"/><circle cx="18.3" cy="4.3" r="2.1" fill="#82b9e1"/><circle cx="1.3" cy="14.8" r="1.3" fill="#c8a27c"/><circle cx="19.3" cy="14.8" r="1.3" fill="#c8a27c"/><circle cx="3.4" cy="27" r="1.4" fill="#c8a27c"/><circle cx="17.1" cy="27" r="1.4" fill="#c8a27c"/><path d="M10.2,0 C5,0 2.2,3 2,7 C1.8,12 1.5,18 1.5,22 C1.5,26.5 5.5,28.5 10.2,28.5 C15,28.5 19,26.5 19,22 C19,18 18.7,12 18.5,7 C18.3,3 15.5,0 10.2,0 Z" fill="#82b9e1"/><circle cx="6.8" cy="8.4" r="3.2" fill="#ffffff"/><circle cx="13.7" cy="8.4" r="2.9" fill="#ffffff"/><circle cx="6.9" cy="8.4" r="1.25" fill="#000000"/><circle cx="13.5" cy="8.4" r="1.25" fill="#000000"/><ellipse cx="10.2" cy="12.3" rx="1.7" ry="1.1" fill="#c8a27c"/><ellipse cx="10.2" cy="11.5" rx="1.0" ry="0.8" fill="#000000"/><rect x="9.3" y="12.6" width="1.8" height="1.7" rx="0.4" fill="#ffffff"/><path d="M12.9,19.2 L18.4,14.2 L18.4,24.1 Z" fill="#e8772e"/><rect x="18.4" y="14.4" width="1.5" height="9.6" fill="#3b4a52"/><path d="M20.2,14.2 L26,19.2 L20.2,24.1 Z" fill="#6cb645"/></svg>
<div class="t" style="left:195.0px;top:1183.5px;line-height:39px;font-size:26px;color:#bbbbbb;letter-spacing:1.037px;">gsession_z_unit_test.go</div>
<svg class="b" style="left:85.6px;top:1231.0px" width="16" height="20" viewBox="0 0 16 20"><path d="M3.5,2.5 L12,10 L3.5,17.5" fill="none" stroke="#afb1b3" stroke-width="2.4"/></svg>
<svg class="b" style="left:122px;top:1230.0px" width="28" height="22" viewBox="0 0 28 22"><path d="M0,0 H10.5 L14,4 H28 V22 H0 Z" fill="#87939e"/></svg>
<div class="t" style="left:159.0px;top:1223.5px;line-height:39px;font-size:26px;color:#bbbbbb;letter-spacing:0.974px;">gspath</div>
<svg class="b" style="left:85.6px;top:1271.0px" width="16" height="20" viewBox="0 0 16 20"><path d="M3.5,2.5 L12,10 L3.5,17.5" fill="none" stroke="#afb1b3" stroke-width="2.4"/></svg>
<svg class="b" style="left:122px;top:1270.0px" width="28" height="22" viewBox="0 0 28 22"><path d="M0,0 H10.5 L14,4 H28 V22 H0 Z" fill="#87939e"/></svg>
<div class="t" style="left:159.0px;top:1263.5px;line-height:39px;font-size:26px;color:#bbbbbb;letter-spacing:1.335px;">gstructs</div>
<svg class="b" style="left:85.6px;top:1311.0px" width="16" height="20" viewBox="0 0 16 20"><path d="M3.5,2.5 L12,10 L3.5,17.5" fill="none" stroke="#afb1b3" stroke-width="2.4"/></svg>
<svg class="b" style="left:122px;top:1310.0px" width="28" height="22" viewBox="0 0 28 22"><path d="M0,0 H10.5 L14,4 H28 V22 H0 Z" fill="#87939e"/></svg>
<div class="t" style="left:159.0px;top:1303.5px;line-height:39px;font-size:26px;color:#bbbbbb;letter-spacing:1.025px;">gtime</div>
<svg class="b" style="left:85.6px;top:1351.0px" width="16" height="20" viewBox="0 0 16 20"><path d="M3.5,2.5 L12,10 L3.5,17.5" fill="none" stroke="#afb1b3" stroke-width="2.4"/></svg>
<svg class="b" style="left:122px;top:1350.0px" width="28" height="22" viewBox="0 0 28 22"><path d="M0,0 H10.5 L14,4 H28 V22 H0 Z" fill="#87939e"/></svg>
<div class="t" style="left:159.0px;top:1343.5px;line-height:39px;font-size:26px;color:#bbbbbb;letter-spacing:1.128px;">gtimer</div>
<svg class="b" style="left:85.6px;top:1391.0px" width="16" height="20" viewBox="0 0 16 20"><path d="M3.5,2.5 L12,10 L3.5,17.5" fill="none" stroke="#afb1b3" stroke-width="2.4"/></svg>
<svg class="b" style="left:122px;top:1390.0px" width="28" height="22" viewBox="0 0 28 22"><path d="M0,0 H10.5 L14,4 H28 V22 H0 Z" fill="#87939e"/></svg>
<div class="t" style="left:159.0px;top:1383.5px;line-height:39px;font-size:26px;color:#bbbbbb;letter-spacing:0.806px;">gview</div>
<svg class="b" style="left:50.3px;top:1431.0px" width="16" height="20" viewBox="0 0 16 20"><path d="M3.5,2.5 L12,10 L3.5,17.5" fill="none" stroke="#afb1b3" stroke-width="2.4"/></svg>
<svg class="b" style="left:86px;top:1430.0px" width="28" height="22" viewBox="0 0 28 22"><path d="M0,0 H10.5 L14,4 H28 V22 H0 Z" fill="#87939e"/></svg>
<div class="t" style="left:122.0px;top:1423.5px;line-height:39px;font-size:26px;color:#bbbbbb;letter-spacing:1.201px;">protocol</div>
<svg class="b" style="left:50.3px;top:1471.0px" width="16" height="20" viewBox="0 0 16 20"><path d="M3.5,2.5 L12,10 L3.5,17.5" fill="none" stroke="#afb1b3" stroke-width="2.4"/></svg>
<svg class="b" style="left:86px;top:1470.0px" width="28" height="22" viewBox="0 0 28 22"><path d="M0,0 H10.5 L14,4 H28 V22 H0 Z" fill="#87939e"/></svg>
</div>
<div class="b" style="left:768px;top:166px;width:28px;height:1500px;background:#404244;"></div>
<div class="b" style="left:42px;top:1638px;width:754px;height:28px;background:#404244;"></div>
<div class="b" style="left:774px;top:510px;width:16px;height:848px;background:#5a5d5f;border-radius:8px;"></div>
<div class="b" style="left:47px;top:1644px;width:627px;height:17px;background:#595b5d;border-radius:8.5px;"></div>
<div class="b" style="left:796px;top:114px;width:2px;height:52px;background:#2b2c2d;"></div>
<div class="b" style="left:42px;top:114px;width:754px;height:52px;background:#3c4754;"></div>
<svg class="b" style="left:68px;top:128px;" width="28" height="26" viewBox="0 0 28 26"><rect x="1" y="1" width="26" height="24" fill="none" stroke="#8f979e" stroke-width="2"/><rect x="4" y="7" width="20" height="15" fill="#4e92c2"/></svg>
<div class="t" style="left:107.0px;top:121.5px;line-height:39px;font-size:26px;color:#c3c7cb;letter-spacing:0.726px;">Project</div>
<svg class="b" style="left:218px;top:136px;" width="19" height="10" viewBox="0 0 19 10"><path d="M0,0 H19 L9.5,10 Z" fill="#afb1b3"/></svg>
<svg class="b" style="left:533px;top:126px;" width="29" height="29" viewBox="0 0 29 29"><circle cx="14.5" cy="14.5" r="12.2" fill="none" stroke="#afb1b3" stroke-width="3.1"/><path d="M14.5,2 V10.5 M14.5,18.5 V27 M2,14.5 H10.5 M18.5,14.5 H27" stroke="#afb1b3" stroke-width="2.8"/></svg>
<svg class="b" style="left:587px;top:126px;" width="26" height="29" viewBox="0 0 26 29"><path d="M1,1.6 H25 M1,27.4 H25" stroke="#afb1b3" stroke-width="3.2"/><path d="M13,6 L20,13 H6 Z M13,23 L20,16 H6 Z" fill="#afb1b3"/></svg>
<svg class="b" style="left:639px;top:126px;" width="26" height="29" viewBox="0 0 26 29"><path d="M1,14.5 H25" stroke="#afb1b3" stroke-width="3.2"/><path d="M13,10.5 L20,3.5 H6 Z M13,18.5 L20,25.5 H6 Z" fill="#afb1b3"/></svg>
<div class="b" style="left:684px;top:120px;width:2px;height:40px;background:#545b63;"></div>
<svg class="b" style="left:703px;top:126px;" width="28" height="28" viewBox="0 0 28 28"><g transform="translate(14,14)"><rect x="-3.1" y="-13.4" width="6.2" height="7" rx="1" transform="rotate(0)" fill="#afb1b3"/><rect x="-3.1" y="-13.4" width="6.2" height="7" rx="1" transform="rotate(60)" fill="#afb1b3"/><rect x="-3.1" y="-13.4" width="6.2" height="7" rx="1" transform="rotate(120)" fill="#afb1b3"/><rect x="-3.1" y="-13.4" width="6.2" height="7" rx="1" transform="rotate(180)" fill="#afb1b3"/><rect x="-3.1" y="-13.4" width="6.2" height="7" rx="1" transform="rotate(240)" fill="#afb1b3"/><rect x="-3.1" y="-13.4" width="6.2" height="7" rx="1" transform="rotate(300)" fill="#afb1b3"/><circle r="7.2" fill="none" stroke="#afb1b3" stroke-width="5.2"/></g></svg>
<div class="b" style="left:758px;top:138px;width:24px;height:4px;background:#afb1b3;"></div>
<div class="b" style="left:798px;top:114px;width:2232px;height:52px;background:#3d3f41;"></div>
<div class="b" style="left:42px;top:166px;width:2988px;height:2px;background:#2b2c2d;"></div>
<svg class="b" style="left:819px;top:126px" width="21.0" height="29.0" viewBox="0 0 21 29"><circle cx="2.2" cy="4.3" r="2.1" fill="#82b9e1"/><circle cx="18.3" cy="4.3" r="2.1" fill="#82b9e1"/><circle cx="1.3" cy="14.8" r="1.3" fill="#c8a27c"/><circle cx="19.3" cy="14.8" r="1.3" fill="#c8a27c"/><circle cx="3.4" cy="27" r="1.4" fill="#c8a27c"/><circle cx="17.1" cy="27" r="1.4" fill="#c8a27c"/><path d="M10.2,0 C5,0 2.2,3 2,7 C1.8,12 1.5,18 1.5,22 C1.5,26.5 5.5,28.5 10.2,28.5 C15,28.5 19,26.5 19,22 C19,18 18.7,12 18.5,7 C18.3,3 15.5,0 10.2,0 Z" fill="#82b9e1"/><circle cx="6.8" cy="8.4" r="3.2" fill="#ffffff"/><circle cx="13.7" cy="8.4" r="2.9" fill="#ffffff"/><circle cx="6.9" cy="8.4" r="1.25" fill="#000000"/><circle cx="13.5" cy="8.4" r="1.25" fill="#000000"/><ellipse cx="10.2" cy="12.3" rx="1.7" ry="1.1" fill="#c8a27c"/><ellipse cx="10.2" cy="11.5" rx="1.0" ry="0.8" fill="#000000"/><rect x="9.3" y="12.6" width="1.8" height="1.7" rx="0.4" fill="#ffffff"/></svg>
<div class="t" style="left:854.0px;top:123.5px;line-height:33px;font-size:22px;color:#bbbbbb;letter-spacing:0.368px;">gsession_storage.go</div>
<svg class="b" style="left:1080px;top:132px;" width="16" height="16" viewBox="0 0 16 16"><path d="M2,2 L14,14 M14,2 L2,14" stroke="#75797b" stroke-width="1.6"/></svg>
<div class="b" style="left:1110px;top:114px;width:314px;height:52px;background:#4e5254;"></div>
<div class="b" style="left:1110px;top:162px;width:314px;height:5px;background:#787e86;"></div>
<svg class="b" style="left:1131px;top:126px" width="21.0" height="29.0" viewBox="0 0 21 29"><circle cx="2.2" cy="4.3" r="2.1" fill="#82b9e1"/><circle cx="18.3" cy="4.3" r="2.1" fill="#82b9e1"/><circle cx="1.3" cy="14.8" r="1.3" fill="#c8a27c"/><circle cx="19.3" cy="14.8" r="1.3" fill="#c8a27c"/><circle cx="3.4" cy="27" r="1.4" fill="#c8a27c"/><circle cx="17.1" cy="27" r="1.4" fill="#c8a27c"/><path d="M10.2,0 C5,0 2.2,3 2,7 C1.8,12 1.5,18 1.5,22 C1.5,26.5 5.5,28.5 10.2,28.5 C15,28.5 19,26.5 19,22 C19,18 18.7,12 18.5,7 C18.3,3 15.5,0 10.2,0 Z" fill="#82b9e1"/><circle cx="6.8" cy="8.4" r="3.2" fill="#ffffff"/><circle cx="13.7" cy="8.4" r="2.9" fill="#ffffff"/><circle cx="6.9" cy="8.4" r="1.25" fill="#000000"/><circle cx="13.5" cy="8.4" r="1.25" fill="#000000"/><ellipse cx="10.2" cy="12.3" rx="1.7" ry="1.1" fill="#c8a27c"/><ellipse cx="10.2" cy="11.5" rx="1.0" ry="0.8" fill="#000000"/><rect x="9.3" y="12.6" width="1.8" height="1.7" rx="0.4" fill="#ffffff"/></svg>
<div class="t" style="left:1166.5px;top:123.5px;line-height:33px;font-size:22px;color:#6d9bd0;letter-spacing:0.277px;">gsession_session.go</div>
<svg class="b" style="left:1392px;top:132px;" width="16" height="16" viewBox="0 0 16 16"><path d="M2,2 L14,14 M14,2 L2,14" stroke="#7f8385" stroke-width="1.6"/></svg>
<div class="b" style="left:796px;top:168px;width:2234px;height:1454px;background:#2b2b2b;"></div>
<div class="b" style="left:796px;top:168px;width:150px;height:1454px;background:#313335;"></div>
<div class="b" style="left:796px;top:1622px;width:2234px;height:44px;background:#313335;"></div>
<div class="b" style="left:796px;top:1622px;width:2234px;height:1px;background:#3b3c3e;"></div>
<div class="b" style="left:0;top:168px;width:3030px;height:1454px;overflow:hidden;">
<div class="b" style="left:947px;top:924px;width:2083px;height:52px;background:#323232;"></div>
<div class="b" style="left:945px;top:0px;width:2px;height:1454px;background:#555555;"></div>
<div class="b" style="left:1026px;top:352px;width:1px;height:52px;background:#444444;"></div>
<div class="b" style="left:1026px;top:716px;width:1px;height:52px;background:#444444;"></div>
<div class="b" style="left:1026px;top:1184px;width:1px;height:52px;background:#444444;"></div>
<div class="ln" style="top:-8.5px;color:#606366">269</div>
<div class="ln" style="top:43.5px;color:#606366">270</div>
<div class="code" style="top:43.5px"><span class="c">// </span><span class="cd">Get</span><span class="c"> retrieves session value with given key.</span></div>
<svg class="b" style="left:934px;top:56px;" width="24" height="29" viewBox="0 0 24 29"><path d="M2,1.5 H22 V18.5 L12,27.5 L2,18.5 Z" fill="#2b2b2b" stroke="#606060" stroke-width="1.8"/><path d="M6.5,11.5 H17.5" stroke="#606060" stroke-width="1.8"/></svg>
<div class="ln" style="top:95.5px;color:#606366">271</div>
<div class="code" style="top:95.5px"><span class="c">// It returns `def` if the key does not exist in the session if `def` is given,</span></div>
<div class="ln" style="top:147.5px;color:#606366">272</div>
<div class="code" style="top:147.5px"><span class="c">// or else it returns nil.</span></div>
<svg class="b" style="left:934px;top:155px;" width="24" height="29" viewBox="0 0 24 29"><path d="M2,27.5 H22 V10.5 L12,1.5 L2,10.5 Z" fill="#2b2b2b" stroke="#606060" stroke-width="1.8"/><path d="M6.5,17.5 H17.5" stroke="#606060" stroke-width="1.8"/></svg>
<div class="ln" style="top:199.5px;color:#606366">273</div>
<div class="code" style="top:199.5px"><span class="k">func</span> (<span class="r">s</span> *<span class="ty">Session</span>) <span class="fd">Get</span>(key <span class="k">string,</span> def ...<span class="k">interface</span>{}) (*<span class="pk">gvar</span>.<span class="ty">Var</span><span class="k">,</span> <span class="k">error</span>) {</div>
<svg class="b" style="left:934px;top:212px;" width="24" height="29" viewBox="0 0 24 29"><path d="M2,1.5 H22 V18.5 L12,27.5 L2,18.5 Z" fill="#2b2b2b" stroke="#606060" stroke-width="1.8"/><path d="M6.5,11.5 H17.5" stroke="#606060" stroke-width="1.8"/></svg>
<div class="ln" style="top:251.5px;color:#606366">274</div>
<div class="code" style="top:251.5px">    <span class="k">if</span> <span class="r">s</span>.id == <span class="s">""</span> <span class="fold">{...}</span></div>
<svg class="b" style="left:934px;top:264px;" width="24" height="24" viewBox="0 0 24 24"><rect x="2" y="1.5" width="20" height="20.5" fill="#2b2b2b" stroke="#606060" stroke-width="1.8"/><path d="M6.5,12 H17.5 M12,6.5 V17.5" stroke="#606060" stroke-width="1.8"/></svg>
<div class="ln" style="top:303.5px;color:#606366">277</div>
<div class="code" style="top:303.5px">    <span class="k">if</span> err := <span class="r">s</span>.<span class="fc">init</span>()<span class="k">;</span> err != <span class="k">nil</span> {</div>
<svg class="b" style="left:934px;top:316px;" width="24" height="29" viewBox="0 0 24 29"><path d="M2,1.5 H22 V18.5 L12,27.5 L2,18.5 Z" fill="#2b2b2b" stroke="#606060" stroke-width="1.8"/><path d="M6.5,11.5 H17.5" stroke="#606060" stroke-width="1.8"/></svg>
<div class="ln" style="top:355.5px;color:#606366">278</div>
<div class="code" style="top:355.5px">        <span class="k">return nil,</span> err</div>
<div class="ln" style="top:407.5px;color:#606366">279</div>
<div class="code" style="top:407.5px">    }</div>
<svg class="b" style="left:934px;top:415px;" width="24" height="29" viewBox="0 0 24 29"><path d="M2,27.5 H22 V10.5 L12,1.5 L2,10.5 Z" fill="#2b2b2b" stroke="#606060" stroke-width="1.8"/><path d="M6.5,17.5 H17.5" stroke="#606060" stroke-width="1.8"/></svg>
<div class="ln" style="top:459.5px;color:#606366">280</div>
<div class="code" style="top:459.5px">    v<span class="k">,</span> err := <span class="r">s</span>.manager.storage.<span class="fc">Get</span>(<span class="r">s</span>.ctx<span class="k">,</span> <span class="r">s</span>.id<span class="k">,</span> key)</div>
<div class="ln" style="top:511.5px;color:#606366">281</div>
<div class="code" style="top:511.5px">    <span class="k">if</span> err != <span class="k">nil</span> &amp;&amp; err != ErrorDisabled <span class="fold">{...}</span></div>
<svg class="b" style="left:934px;top:524px;" width="24" height="24" viewBox="0 0 24 24"><rect x="2" y="1.5" width="20" height="20.5" fill="#2b2b2b" stroke="#606060" stroke-width="1.8"/><path d="M6.5,12 H17.5 M12,6.5 V17.5" stroke="#606060" stroke-width="1.8"/></svg>
<div class="ln" style="top:563.5px;color:#606366">285</div>
<div class="code" style="top:563.5px">    <span class="k">if</span> v != <span class="k">nil</span> <span class="fold">{...}</span></div>
<svg class="b" style="left:934px;top:576px;" width="24" height="24" viewBox="0 0 24 24"><rect x="2" y="1.5" width="20" height="20.5" fill="#2b2b2b" stroke="#606060" stroke-width="1.8"/><path d="M6.5,12 H17.5 M12,6.5 V17.5" stroke="#606060" stroke-width="1.8"/></svg>
<div class="ln" style="top:615.5px;color:#606366">288</div>
<div class="code" style="top:615.5px">    <span class="k">if</span> <span class="sv">v</span> := <span class="r">s</span>.data.<span class="fc">Get</span>(key)<span class="k">;</span> <span class="sv">v</span> != <span class="k">nil</span> <span class="fold">{...}</span></div>
<svg class="b" style="left:934px;top:628px;" width="24" height="24" viewBox="0 0 24 24"><rect x="2" y="1.5" width="20" height="20.5" fill="#2b2b2b" stroke="#606060" stroke-width="1.8"/><path d="M6.5,12 H17.5 M12,6.5 V17.5" stroke="#606060" stroke-width="1.8"/></svg>
<div class="ln" style="top:667.5px;color:#606366">291</div>
<div class="code" style="top:667.5px">    <span class="k">if</span> <span class="k">len</span>(def) &gt; <span class="n">0</span> {</div>
<svg class="b" style="left:934px;top:680px;" width="24" height="29" viewBox="0 0 24 29"><path d="M2,1.5 H22 V18.5 L12,27.5 L2,18.5 Z" fill="#2b2b2b" stroke="#606060" stroke-width="1.8"/><path d="M6.5,11.5 H17.5" stroke="#606060" stroke-width="1.8"/></svg>
<div class="ln" style="top:719.5px;color:#606366">292</div>
<div class="code" style="top:719.5px">        <span class="k">return</span> <span class="pk">gvar</span>.<span class="fc">New</span>(def[<span class="n">0</span>])<span class="k">,</span> <span class="k">nil</span></div>
<div class="ln" style="top:771.5px;color:#606366">293</div>
<div class="code" style="top:771.5px">    }</div>
<svg class="b" style="left:934px;top:779px;" width="24" height="29" viewBox="0 0 24 29"><path d="M2,27.5 H22 V10.5 L12,1.5 L2,10.5 Z" fill="#2b2b2b" stroke="#606060" stroke-width="1.8"/><path d="M6.5,17.5 H17.5" stroke="#606060" stroke-width="1.8"/></svg>
<div class="ln" style="top:823.5px;color:#606366">294</div>
<div class="code" style="top:823.5px">    <span class="k">return nil, nil</span></div>
<div class="ln" style="top:875.5px;color:#606366">295</div>
<div class="code" style="top:875.5px">}</div>
<svg class="b" style="left:934px;top:883px;" width="24" height="29" viewBox="0 0 24 29"><path d="M2,27.5 H22 V10.5 L12,1.5 L2,10.5 Z" fill="#2b2b2b" stroke="#606060" stroke-width="1.8"/><path d="M6.5,17.5 H17.5" stroke="#606060" stroke-width="1.8"/></svg>
<div class="ln" style="top:927.5px;color:#a4a3a3">296</div>
<div class="ln" style="top:979.5px;color:#606366">297</div>
<div class="code" style="top:979.5px"><span class="c">// </span><span class="cd">MustGet</span><span class="c"> performs as function </span><span class="cd">Get</span><span class="c">, but it panics if any error occurs.</span></div>
<div class="ln" style="top:1031.5px;color:#606366">298</div>
<div class="code" style="top:1031.5px"><span class="k">func</span> (<span class="r">s</span> *<span class="ty">Session</span>) <span class="fd">MustGet</span>(key <span class="k">string,</span> def ...<span class="k">interface</span>{}) *<span class="pk">gvar</span>.<span class="ty">Var</span> {</div>
<svg class="b" style="left:934px;top:1044px;" width="24" height="29" viewBox="0 0 24 29"><path d="M2,1.5 H22 V18.5 L12,27.5 L2,18.5 Z" fill="#2b2b2b" stroke="#606060" stroke-width="1.8"/><path d="M6.5,11.5 H17.5" stroke="#606060" stroke-width="1.8"/></svg>
<div class="ln" style="top:1083.5px;color:#606366">299</div>
<div class="code" style="top:1083.5px">    v<span class="k">,</span> err := <span class="r">s</span>.<span class="fc">Get</span>(key<span class="k">,</span> def...)</div>
<div class="ln" style="top:1135.5px;color:#606366">300</div>
<div class="code" style="top:1135.5px">    <span class="k">if</span> err != <span class="k">nil</span> {</div>
<svg class="b" style="left:934px;top:1148px;" width="24" height="29" viewBox="0 0 24 29"><path d="M2,1.5 H22 V18.5 L12,27.5 L2,18.5 Z" fill="#2b2b2b" stroke="#606060" stroke-width="1.8"/><path d="M6.5,11.5 H17.5" stroke="#606060" stroke-width="1.8"/></svg>
<div class="ln" style="top:1187.5px;color:#606366">301</div>
<div class="code" style="top:1187.5px">        <span class="k">panic</span>(err)</div>
<div class="ln" style="top:1239.5px;color:#606366">302</div>
<div class="code" style="top:1239.5px">    }</div>
<svg class="b" style="left:934px;top:1247px;" width="24" height="29" viewBox="0 0 24 29"><path d="M2,27.5 H22 V10.5 L12,1.5 L2,10.5 Z" fill="#2b2b2b" stroke="#606060" stroke-width="1.8"/><path d="M6.5,17.5 H17.5" stroke="#606060" stroke-width="1.8"/></svg>
<div class="ln" style="top:1291.5px;color:#606366">303</div>
<div class="code" style="top:1291.5px">    <span class="k">return</span> v</div>
<div class="ln" style="top:1343.5px;color:#606366">304</div>
<div class="code" style="top:1343.5px">}</div>
<svg class="b" style="left:934px;top:1351px;" width="24" height="29" viewBox="0 0 24 29"><path d="M2,27.5 H22 V10.5 L12,1.5 L2,10.5 Z" fill="#2b2b2b" stroke="#606060" stroke-width="1.8"/><path d="M6.5,17.5 H17.5" stroke="#606060" stroke-width="1.8"/></svg>
<div class="ln" style="top:1395.5px;color:#606366">305</div>
<svg class="b" style="left:926px;top:966px;" width="20" height="21" viewBox="0 0 20 21"><path d="M0,0 L19.5,10.3 L0,20.6 Z" fill="#6b717b"/></svg>
</div>
<div class="b" style="left:960px;top:1594px;width:2070px;height:28px;background:#3a3b3c;"></div>
<div class="b" style="left:965.5px;top:1599.5px;width:1764.5px;height:17px;background:#595b5d;border-radius:8.5px;"></div>
<div class="b" style="left:3008px;top:1237px;width:16px;height:96px;background:#595b5d;border-radius:8px;"></div>
<div class="b" style="left:2994px;top:1302px;width:4px;height:9px;background:#6e7f90;"></div>
<div class="b" style="left:2994px;top:1366px;width:4px;height:31px;background:#5b8f5e;"></div>
<svg class="b" style="left:2889px;top:183px;" width="26" height="26" viewBox="0 0 26 26"><path d="M2,11 L9.5,17.5 L23.5,2.5" fill="none" stroke="#5ba05a" stroke-width="4.6"/><path d="M1,24.5 L6,20 L10,24 L14.5,19.5 L18.5,23.5 L24,18.5" fill="none" stroke="#5ba05a" stroke-width="1.8"/></svg>
<div class="t" style="left:2920.0px;top:177.0px;line-height:34px;font-size:23px;color:#a9a9a9;letter-spacing:0.000px;">2</div>
<svg class="b" style="left:2954px;top:186px;" width="20" height="14" viewBox="0 0 20 14"><path d="M2,12 L10,3.5 L18,12" fill="none" stroke="#a9a9a9" stroke-width="2.8"/></svg>
<svg class="b" style="left:2996px;top:188px;" width="20" height="14" viewBox="0 0 20 14"><path d="M2,2 L10,10.5 L18,2" fill="none" stroke="#a9a9a9" stroke-width="2.8"/></svg>
<div class="b" style="left:1930.5px;top:357px;width:179px;height:50px;border:6px solid #e8402a;border-radius:12px;"></div>
<div class="b" style="left:1994px;top:1198px;width:173px;height:45px;border:6px solid #e8402a;border-radius:12px;"></div>
<svg class="b" style="left:2118px;top:412px" width="132" height="75" viewBox="2118 412 132 75"><path d="M2124.5,422.8 L2158.5,418.6 L2151.0,428.6 L2242.8,474.3 L2240.2,479.7 L2141.6,440.4 L2144.2,450.2 Z" fill="#e8402a" stroke="#e8402a" stroke-width="2.5" stroke-linejoin="round"/></svg>
<svg class="b" style="left:2174px;top:1251px" width="119" height="73" viewBox="2174 1251 119 73"><path d="M2180.8,1263.2 L2214.5,1257.4 L2207.4,1266.8 L2285.8,1310.7 L2283.2,1316.1 L2199.6,1278.6 L2198.8,1287.8 Z" fill="#e8402a" stroke="#e8402a" stroke-width="2.5" stroke-linejoin="round"/></svg>
<div class="t" style="left:2256px;top:458.5px;font-size:36px;line-height:48px;color:#e8402a;font-weight:300;-webkit-text-stroke:0.5px;font-family:'Noto Sans CJK SC',sans-serif;">泛型</div>
<div class="t" style="left:2302px;top:1288.5px;font-size:36px;line-height:48px;color:#e8402a;font-weight:300;-webkit-text-stroke:0.5px;font-family:'Noto Sans CJK SC',sans-serif;">泛型</div>
<div class="b" style="left:0px;top:1666px;width:3072px;height:42px;background:#3d3f41;"></div>
<div class="b" style="left:0px;top:1666px;width:3072px;height:2px;background:#2f3032;"></div>
<div class="b" style="left:0px;top:1708.5px;width:3072px;height:2px;background:#4a4c4d;"></div>
<svg class="b" style="left:61px;top:1675px;" width="18" height="26" viewBox="0 0 18 26"><path d="M4,5 V22 M4,15 C12,15 14,13 14,8" fill="none" stroke="#afb1b3" stroke-width="2.8"/><circle cx="4" cy="4" r="3.2" fill="#afb1b3"/><circle cx="4" cy="22" r="3.2" fill="#afb1b3"/><circle cx="14" cy="7" r="3.2" fill="#afb1b3"/></svg>
<div class="t" style="left:92.0px;top:1671.5px;line-height:33px;font-size:22px;color:#bbbbbb;letter-spacing:0.296px;">Git</div>
<svg class="b" style="left:160px;top:1676px;" width="26" height="26" viewBox="0 0 26 26"><circle cx="10" cy="10" r="7.6" fill="none" stroke="#afb1b3" stroke-width="3.2"/><path d="M15.5,15.5 L23.5,23.5" stroke="#afb1b3" stroke-width="3.8"/></svg>
<div class="t" style="left:194.0px;top:1671.5px;line-height:33px;font-size:22px;color:#bbbbbb;letter-spacing:0.052px;">Find</div>
<svg class="b" style="left:277px;top:1677px;" width="18" height="22" viewBox="0 0 18 22"><path d="M0.5,0.5 L17.5,11 L0.5,21.5 Z" fill="#afb1b3"/></svg>
<div class="t" style="left:308.0px;top:1671.5px;line-height:33px;font-size:22px;color:#bbbbbb;letter-spacing:-0.452px;">Run</div>
<svg class="b" style="left:387px;top:1678px;" width="22" height="20" viewBox="0 0 22 20"><path d="M0,2.5 H4 M7,2.5 H22 M0,10 H4 M7,10 H22 M0,17.5 H4 M7,17.5 H22" stroke="#afb1b3" stroke-width="3.4"/></svg>
<div class="t" style="left:419.0px;top:1671.5px;line-height:33px;font-size:22px;color:#bbbbbb;letter-spacing:-0.538px;">TODO</div>
<svg class="b" style="left:522px;top:1677px;" width="22" height="22" viewBox="0 0 22 22"><circle cx="11" cy="11" r="10.5" fill="#afb1b3"/><path d="M11,4.5 V12.5" stroke="#3d3f41" stroke-width="3.2"/><circle cx="11" cy="16.6" r="1.9" fill="#3d3f41"/></svg>
<div class="t" style="left:554.0px;top:1671.5px;line-height:33px;font-size:22px;color:#bbbbbb;letter-spacing:0.261px;">Problems</div>
<svg class="b" style="left:694px;top:1677px;" width="22" height="22" viewBox="0 0 22 22"><rect x="0" y="0" width="22" height="22" fill="#afb1b3"/><path d="M4,5 L10,10 L4,15 M11,16.5 H18" fill="none" stroke="#3d3f41" stroke-width="2.4"/></svg>
<div class="t" style="left:727.0px;top:1671.5px;line-height:33px;font-size:22px;color:#bbbbbb;letter-spacing:0.109px;">Terminal</div>
<div class="b" style="left:2640px;top:1675px;width:26px;height:26px;background:#5da05b;border-radius:13px 13px 3px 13px;"></div>
<div class="t" style="left:2647.5px;top:1673.0px;line-height:31px;font-size:21px;color:#ffffff;letter-spacing:0.000px;font-weight:700;">1</div>
<div class="t" style="left:2675.0px;top:1671.5px;line-height:33px;font-size:22px;color:#bbbbbb;letter-spacing:-0.008px;">Event Log</div>
<svg class="b" style="left:2818px;top:1675px" width="26" height="26" viewBox="0 0 26 26"><rect x="1.3" y="1.3" width="23.4" height="23.4" rx="1.5" fill="none" stroke="#0a0a0a" stroke-width="2.6"/><rect x="17" y="2.8" width="1.6" height="1.4" fill="#8a8a8a"/><rect x="19.4" y="2.8" width="1.6" height="1.4" fill="#8a8a8a"/><rect x="21.8" y="2.8" width="1.6" height="1.4" fill="#8a8a8a"/><rect x="1.3" y="5.2" width="23.4" height="1.2" fill="#0a0a0a"/><text x="13" y="19.6" font-family="Liberation Sans, sans-serif" font-size="10.5" font-weight="700" text-anchor="middle" fill="#0a0a0a" letter-spacing="-0.3">/API</text></svg>
<div class="t" style="left:2853.0px;top:1671.5px;line-height:33px;font-size:22px;color:#bbbbbb;letter-spacing:0.202px;">Audit Problems</div>
<svg class="b" style="left:12px;top:1718px;" width="26" height="24" viewBox="0 0 26 24"><path d="M6,1.5 H24.5 V18.5 H6 Z" fill="none" stroke="#afb1b3" stroke-width="2.2"/><path d="M2,5 V22.5 H20" fill="none" stroke="#afb1b3" stroke-width="2.2"/></svg>
<div class="t" style="left:62.5px;top:1711px;line-height:38px;font-size:22px;color:#bbbbbb;"><span style="letter-spacing:0.379px">Looking for usages of the interface methods // Show Options (</span><span style="display:inline-block;width:63px;height:38px;vertical-align:top;line-height:36px;text-align:center;font-family:'DejaVu Sans',sans-serif;font-size:22px;letter-spacing:-1.4px;">⌥⇧⌘</span><span style="letter-spacing:0.195px">F7) // Don't show again (17 minutes ago)</span></div>
<div class="t" style="left:2524.5px;top:1713.5px;line-height:33px;font-size:22px;color:#bbbbbb;letter-spacing:0.090px;">296:1</div>
<div class="t" style="left:2604.5px;top:1713.5px;line-height:33px;font-size:22px;color:#bbbbbb;letter-spacing:-0.836px;">LF</div>
<div class="t" style="left:2652.5px;top:1713.5px;line-height:33px;font-size:22px;color:#bbbbbb;letter-spacing:0.536px;">UTF-8</div>
<div class="t" style="left:2742.5px;top:1713.5px;line-height:33px;font-size:22px;color:#bbbbbb;letter-spacing:-0.156px;">Tab</div>
<svg class="b" style="left:2806px;top:1716px;" width="19" height="28" viewBox="0 0 19 28"><path d="M4,5 V24 M4,16 C13,16 15,14 15,8" fill="none" stroke="#afb1b3" stroke-width="2.8"/><circle cx="4" cy="4.5" r="3.3" fill="#afb1b3"/><circle cx="4" cy="23.5" r="3.3" fill="#afb1b3"/><circle cx="15" cy="7" r="3.3" fill="#afb1b3"/></svg>
<div class="t" style="left:2837.0px;top:1713.5px;line-height:33px;font-size:22px;color:#bbbbbb;letter-spacing:0.212px;">master</div>
<svg class="b" style="left:2925px;top:1717px;" width="24" height="26" viewBox="0 0 24 26"><path d="M2.5,13 V7 A5,5 0 0 1 12.5,7 V9" fill="none" stroke="#afb1b3" stroke-width="3"/><rect x="8" y="12" width="15.5" height="13" fill="#afb1b3"/></svg>
<svg class="b" style="left:2971px;top:1714px;" width="34" height="32" viewBox="0 0 34 32"><path d="M7,21 A6.5,6.5 0 0 1 6,8.5 A9.5,9.5 0 0 1 24,8 A6.8,6.8 0 0 1 27,18 L22,15.5 L16,21 Z" fill="#afb1b3"/><text x="11.5" y="17.5" font-family="Liberation Sans, sans-serif" font-size="14" font-weight="700" fill="#3d3f41">?</text><circle cx="25.5" cy="24" r="4.6" fill="none" stroke="#afb1b3" stroke-width="3.4" stroke-dasharray="2.4 1.2"/><circle cx="25.5" cy="24" r="3" fill="none" stroke="#afb1b3" stroke-width="2"/></svg>
<div class="b" style="left:3024px;top:1718px;width:24px;height:24px;background:#c25c55;border-radius:50%;"></div>
<div class="b" style="left:3034.5px;top:1722px;width:3px;height:10.5px;background:#3d3f41;"></div>
<div class="b" style="left:3034.5px;top:1734.5px;width:3px;height:3.5px;background:#3d3f41;"></div>
<div class="b" style="left:0;top:0;width:3072px;height:1750px;border-radius:20px;box-shadow:inset 0 2px 0 #85878a, inset 2px 0 0 #636567, inset -2px 0 0 #5c5e60, inset 0 -2px 0 #5c5e60;"></div>
</div></body></html>
